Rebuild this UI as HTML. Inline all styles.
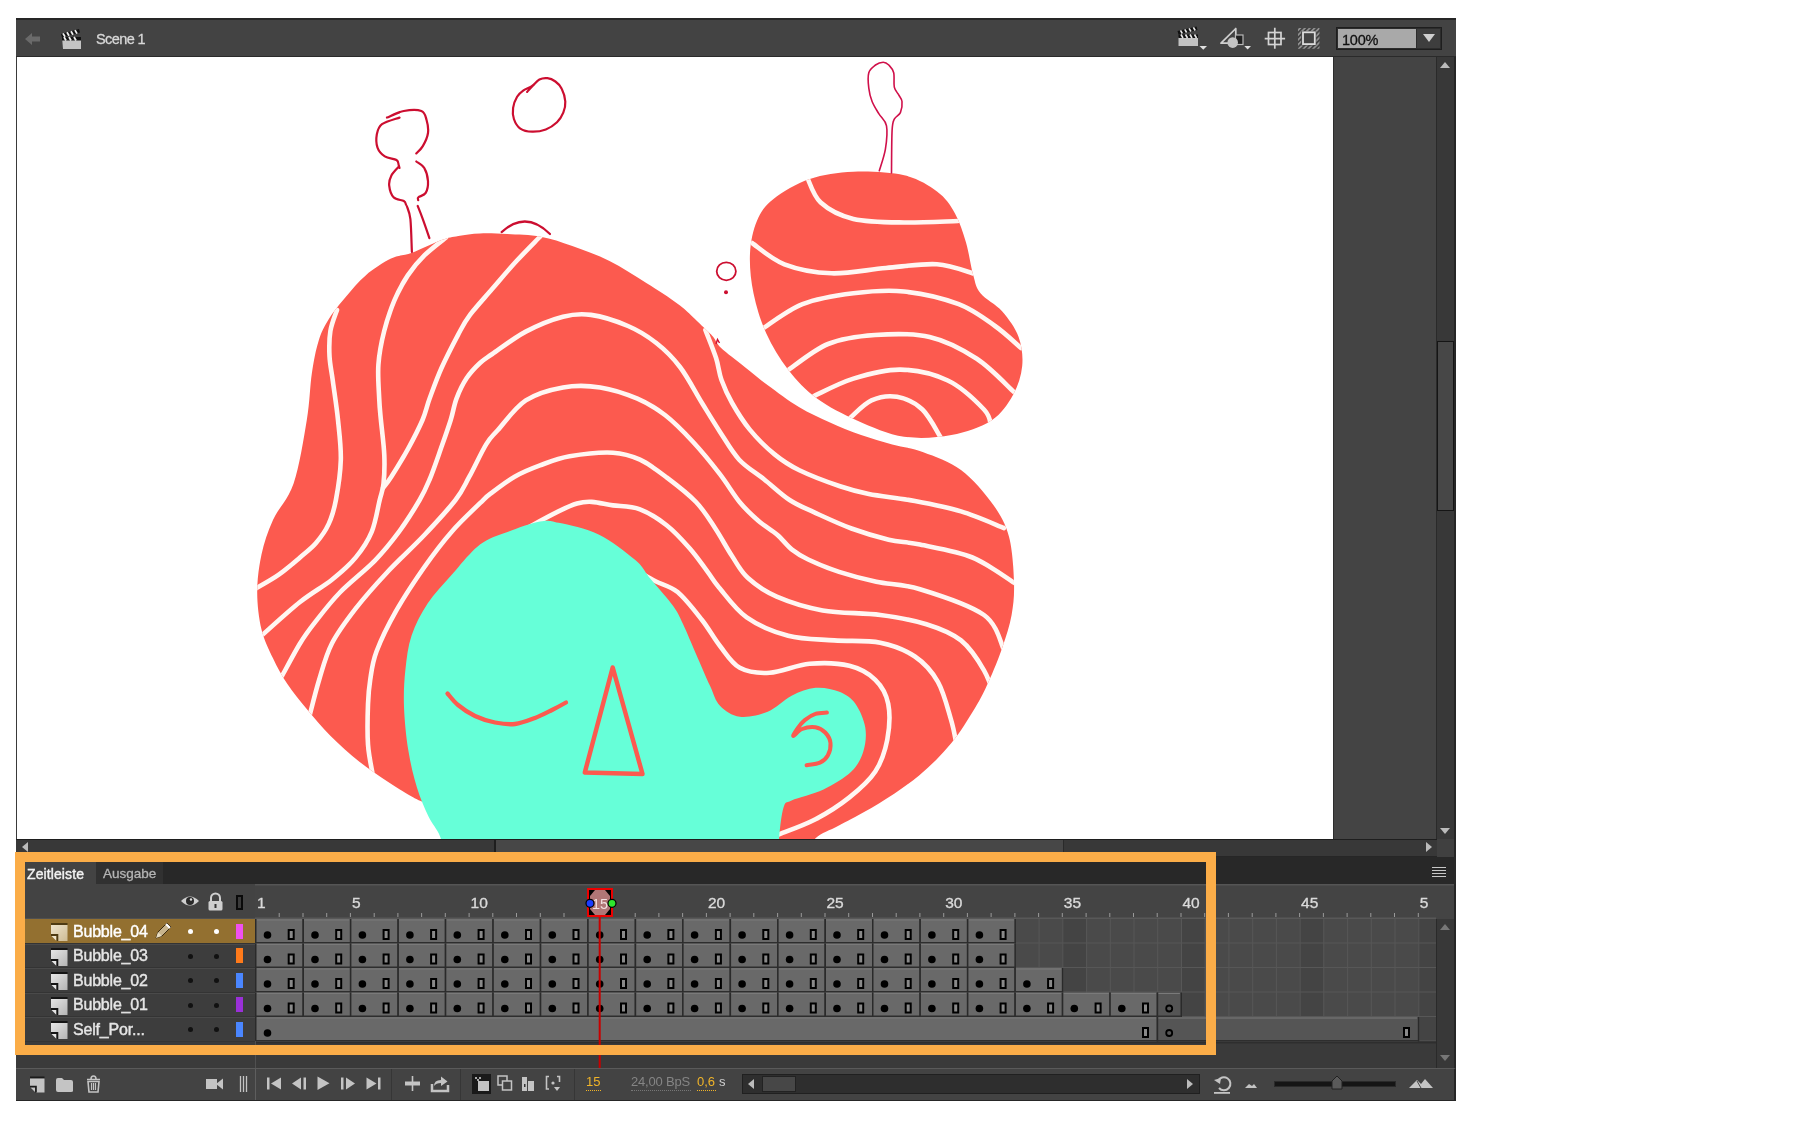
<!DOCTYPE html><html><head><meta charset="utf-8"><style>
*{-webkit-font-smoothing:antialiased}
html,body{margin:0;padding:0;background:#fff;width:1800px;height:1129px;overflow:hidden;position:relative;font-family:"Liberation Sans",sans-serif}
div,svg{box-sizing:border-box;will-change:transform}
.a{position:absolute}
</style></head><body>
<div class="a" style="left:16px;top:18px;width:1440px;height:39px;background:#434343;border-top:2px solid #262626;border-bottom:1px solid #2a2a2a"></div>
<div class="a" style="left:96px;top:31px;font-size:14.5px;color:#d8d8d8;letter-spacing:-0.6px;-webkit-text-stroke:0.3px #d8d8d8">Scene 1</div>
<svg class="a" style="left:24px;top:31px" width="18" height="16"><path d="M1,8 L8,2 L8,5.5 L16,5.5 L16,10.5 L8,10.5 L8,14 Z" fill="#6a6a6a"/></svg>
<svg class="a" style="left:60px;top:28px" width="24" height="22"><path d="M2,9 L21,9 L21,21 L3,21 Z" fill="#c4c4c4"/><path d="M1,6 L19,1 L20,4.5 L2,9.5 Z" fill="#111"/><path d="M3,5.4 L5,8.8 M7,4.3 L9,7.8 M11,3.2 L13,6.7 M15,2.1 L17,5.6" stroke="#eee" stroke-width="1.8"/><rect x="2" y="9" width="19" height="3.5" fill="#111"/><path d="M4,9 L6,12.5 M9,9 L11,12.5 M14,9 L16,12.5" stroke="#eee" stroke-width="1.8"/></svg>
<svg class="a" style="left:1170px;top:22px" width="160" height="34" viewBox="1170 22 160 34"><rect x="1178.5" y="37.5" width="19.5" height="8.5" fill="#c2c2c2"/><rect x="1178.5" y="34.5" width="19.5" height="3.5" fill="#111"/><path d="M1181,34.5 l2,3.5 M1185.5,34.5 l2,3.5 M1190,34.5 l2,3.5 M1194.5,34.5 l2,3.5" stroke="#e8e8e8" stroke-width="1.6"/><path d="M1177.5,31 L1196.5,26.5 L1197.5,30 L1178.5,34.5 Z" fill="#111"/><path d="M1180.5,30.3 l1.8,3.2 M1184.8,29.3 l1.8,3.2 M1189.1,28.3 l1.8,3.2 M1193.4,27.3 l1.8,3.2" stroke="#e8e8e8" stroke-width="1.6"/><path d="M1199.5,46 L1207,46 L1203.25,49.8 Z" fill="#e0e0e0"/><path d="M1221,43.2 L1235.8,28.5 L1235.8,43.2 Z" fill="none" stroke="#d0d0d0" stroke-width="1.7" stroke-linejoin="round"/><rect x="1235.5" y="35" width="7.5" height="9.5" fill="#222" stroke="#b8b8b8" stroke-width="1.2"/><circle cx="1232.7" cy="42.6" r="5.3" fill="#c4c4c4"/><path d="M1244.3,46 L1251,46 L1247.65,49.6 Z" fill="#e0e0e0"/><rect x="1268.5" y="32.5" width="12.5" height="12" fill="none" stroke="#d4d4d4" stroke-width="1.7"/><path d="M1264.7,38.6 H1285.1 M1274.8,27.8 V48.7" stroke="#d4d4d4" stroke-width="1.7"/><defs><pattern id="htch" width="3.4" height="3.4" patternUnits="userSpaceOnUse" patternTransform="rotate(45)"><rect width="1.7" height="3.4" fill="#909090"/></pattern></defs><path d="M1298,28 H1319.5 V48.8 H1298 Z M1301.2,31.2 V45.6 H1316.3 V31.2 Z" fill="url(#htch)" fill-rule="evenodd"/><rect x="1303" y="32.3" width="11.8" height="11.8" fill="#434343" stroke="#dcdcdc" stroke-width="1.8"/></svg>
<div class="a" style="left:1336px;top:27px;width:106px;height:23px;background:#2c2c2c;border:1px solid #1e1e1e"></div>
<div class="a" style="left:1338px;top:29px;width:78px;height:19px;background:#a9a9a9"></div>
<div class="a" style="left:1417px;top:29px;width:23px;height:19px;background:#3e3e3e"></div>
<svg class="a" style="left:1422px;top:33px" width="14" height="10"><path d="M1,1 L13,1 L7,9 Z" fill="#cfcfcf"/></svg>
<div class="a" style="left:1342px;top:31.5px;font-size:14.5px;color:#111;letter-spacing:-0.2px;-webkit-text-stroke:0.3px #111">100%</div>
<div class="a" style="left:16px;top:57px;width:1317px;height:782px;background:#fff;border-left:1px solid #3a3a3a;overflow:hidden"></div>
<svg width="1316" height="782" viewBox="17 57 1316 782" style="position:absolute;left:17px;top:57px">
<defs><clipPath id="hc"><path d="M412.0,252.7 C420.4,249.6 433.8,242.8 441.5,240.0 C449.2,237.2 451.9,237.0 458.3,235.9 C464.7,234.8 471.9,233.7 480.0,233.4 C488.1,233.1 497.1,233.4 507.2,234.0 C517.3,234.6 529.9,234.7 540.7,236.7 C551.6,238.7 560.8,241.9 572.3,246.0 C583.8,250.1 597.1,254.8 609.5,261.0 C621.9,267.2 635.0,275.8 646.7,283.2 C658.5,290.6 670.2,297.9 680.0,305.6 C689.8,313.3 700.1,324.1 705.6,329.3 C711.1,334.6 710.7,334.0 713.3,337.1 C715.9,340.2 715.9,343.1 721.1,348.0 C726.3,352.9 736.6,360.5 744.4,366.7 C752.2,372.9 758.7,378.6 767.8,385.3 C776.9,392.0 788.5,400.9 798.9,407.1 C809.3,413.3 819.6,417.9 830.0,422.6 C840.4,427.3 850.7,431.5 861.1,435.1 C871.5,438.7 881.8,441.5 892.2,444.4 C902.6,447.2 911.8,447.9 923.3,452.2 C934.8,456.5 949.4,461.3 961.0,470.0 C972.6,478.7 985.0,493.4 993.0,504.5 C1001.0,515.6 1005.5,523.7 1009.0,536.7 C1012.5,549.8 1013.6,569.8 1014.0,582.8 C1014.4,595.8 1013.5,604.2 1011.6,615.0 C1009.7,625.8 1006.2,636.2 1002.4,647.3 C998.6,658.4 993.2,671.7 988.6,681.8 C984.0,691.9 981.3,697.7 975.0,708.0 C968.7,718.3 960.3,732.4 951.0,743.6 C941.7,754.8 931.1,765.5 919.1,775.4 C907.1,785.3 892.6,795.0 879.3,803.3 C866.0,811.6 850.0,819.5 839.4,825.3 C828.8,831.1 822.1,832.4 815.5,838.2 C808.9,844.0 849.2,856.4 800.0,860.0 C750.8,863.6 579.2,868.0 520.0,860.0 C460.8,852.0 461.2,821.7 445.0,812.0 C428.8,802.3 428.3,804.6 422.7,802.0 C417.1,799.4 416.9,799.6 411.2,796.3 C405.4,793.0 396.8,787.8 388.2,782.0 C379.6,776.2 369.0,769.5 359.4,761.8 C349.8,754.1 339.2,744.6 330.6,736.0 C322.0,727.4 314.8,718.7 307.6,710.0 C300.4,701.3 293.2,692.6 287.4,684.0 C281.6,675.4 277.3,667.3 273.0,658.2 C268.7,649.1 264.1,640.4 261.5,629.4 C258.9,618.4 257.2,604.5 257.2,592.0 C257.2,579.5 258.9,566.5 261.5,554.5 C264.1,542.5 267.6,531.8 273.0,520.0 C278.4,508.2 288.0,500.3 293.6,483.6 C299.2,466.9 303.8,438.4 306.8,420.0 C309.9,401.6 309.9,386.2 311.9,373.0 C313.9,359.8 315.8,350.0 318.6,341.0 C321.4,332.0 324.2,326.5 328.7,319.2 C333.2,311.9 339.3,304.6 345.5,297.3 C351.7,290.0 358.1,281.8 365.7,275.4 C373.3,268.9 383.3,262.4 391.0,258.6 C398.7,254.8 403.6,255.8 412.0,252.7Z"/></clipPath><clipPath id="bc"><path d="M809.8,179.0 C823.1,174.5 837.7,172.3 853.4,171.7 C869.1,171.1 890.3,172.0 904.2,175.3 C918.1,178.6 928.5,185.2 937.0,191.6 C945.5,197.9 950.2,204.9 955.0,213.4 C959.8,221.9 963.0,232.2 966.0,242.5 C969.0,252.8 970.8,266.5 973.2,275.0 C975.6,283.5 975.6,287.2 980.5,293.3 C985.4,299.4 995.9,304.2 1002.3,311.5 C1008.6,318.8 1015.3,327.9 1018.6,337.0 C1021.9,346.1 1023.1,356.3 1022.2,366.0 C1021.3,375.7 1018.1,385.9 1013.0,395.0 C1007.9,404.1 1001.7,413.7 991.4,420.4 C981.1,427.1 966.0,432.3 951.4,435.0 C936.8,437.7 919.7,439.1 904.0,436.7 C888.3,434.3 871.5,426.8 857.0,420.4 C842.5,414.0 828.5,407.1 817.0,398.6 C805.5,390.1 796.5,380.5 788.0,369.6 C779.5,358.7 772.0,346.0 766.2,333.3 C760.5,320.6 756.2,306.6 753.5,293.3 C750.8,280.0 749.4,265.5 750.0,253.4 C750.6,241.3 753.1,229.8 757.0,220.7 C760.9,211.6 764.7,205.8 773.5,198.9 C782.3,192.0 796.5,183.5 809.8,179.0Z"/></clipPath></defs>
<path d="M412.0,252.7 C420.4,249.6 433.8,242.8 441.5,240.0 C449.2,237.2 451.9,237.0 458.3,235.9 C464.7,234.8 471.9,233.7 480.0,233.4 C488.1,233.1 497.1,233.4 507.2,234.0 C517.3,234.6 529.9,234.7 540.7,236.7 C551.6,238.7 560.8,241.9 572.3,246.0 C583.8,250.1 597.1,254.8 609.5,261.0 C621.9,267.2 635.0,275.8 646.7,283.2 C658.5,290.6 670.2,297.9 680.0,305.6 C689.8,313.3 700.1,324.1 705.6,329.3 C711.1,334.6 710.7,334.0 713.3,337.1 C715.9,340.2 715.9,343.1 721.1,348.0 C726.3,352.9 736.6,360.5 744.4,366.7 C752.2,372.9 758.7,378.6 767.8,385.3 C776.9,392.0 788.5,400.9 798.9,407.1 C809.3,413.3 819.6,417.9 830.0,422.6 C840.4,427.3 850.7,431.5 861.1,435.1 C871.5,438.7 881.8,441.5 892.2,444.4 C902.6,447.2 911.8,447.9 923.3,452.2 C934.8,456.5 949.4,461.3 961.0,470.0 C972.6,478.7 985.0,493.4 993.0,504.5 C1001.0,515.6 1005.5,523.7 1009.0,536.7 C1012.5,549.8 1013.6,569.8 1014.0,582.8 C1014.4,595.8 1013.5,604.2 1011.6,615.0 C1009.7,625.8 1006.2,636.2 1002.4,647.3 C998.6,658.4 993.2,671.7 988.6,681.8 C984.0,691.9 981.3,697.7 975.0,708.0 C968.7,718.3 960.3,732.4 951.0,743.6 C941.7,754.8 931.1,765.5 919.1,775.4 C907.1,785.3 892.6,795.0 879.3,803.3 C866.0,811.6 850.0,819.5 839.4,825.3 C828.8,831.1 822.1,832.4 815.5,838.2 C808.9,844.0 849.2,856.4 800.0,860.0 C750.8,863.6 579.2,868.0 520.0,860.0 C460.8,852.0 461.2,821.7 445.0,812.0 C428.8,802.3 428.3,804.6 422.7,802.0 C417.1,799.4 416.9,799.6 411.2,796.3 C405.4,793.0 396.8,787.8 388.2,782.0 C379.6,776.2 369.0,769.5 359.4,761.8 C349.8,754.1 339.2,744.6 330.6,736.0 C322.0,727.4 314.8,718.7 307.6,710.0 C300.4,701.3 293.2,692.6 287.4,684.0 C281.6,675.4 277.3,667.3 273.0,658.2 C268.7,649.1 264.1,640.4 261.5,629.4 C258.9,618.4 257.2,604.5 257.2,592.0 C257.2,579.5 258.9,566.5 261.5,554.5 C264.1,542.5 267.6,531.8 273.0,520.0 C278.4,508.2 288.0,500.3 293.6,483.6 C299.2,466.9 303.8,438.4 306.8,420.0 C309.9,401.6 309.9,386.2 311.9,373.0 C313.9,359.8 315.8,350.0 318.6,341.0 C321.4,332.0 324.2,326.5 328.7,319.2 C333.2,311.9 339.3,304.6 345.5,297.3 C351.7,290.0 358.1,281.8 365.7,275.4 C373.3,268.9 383.3,262.4 391.0,258.6 C398.7,254.8 403.6,255.8 412.0,252.7Z" fill="#fc5a4f"/>
<path d="M809.8,179.0 C823.1,174.5 837.7,172.3 853.4,171.7 C869.1,171.1 890.3,172.0 904.2,175.3 C918.1,178.6 928.5,185.2 937.0,191.6 C945.5,197.9 950.2,204.9 955.0,213.4 C959.8,221.9 963.0,232.2 966.0,242.5 C969.0,252.8 970.8,266.5 973.2,275.0 C975.6,283.5 975.6,287.2 980.5,293.3 C985.4,299.4 995.9,304.2 1002.3,311.5 C1008.6,318.8 1015.3,327.9 1018.6,337.0 C1021.9,346.1 1023.1,356.3 1022.2,366.0 C1021.3,375.7 1018.1,385.9 1013.0,395.0 C1007.9,404.1 1001.7,413.7 991.4,420.4 C981.1,427.1 966.0,432.3 951.4,435.0 C936.8,437.7 919.7,439.1 904.0,436.7 C888.3,434.3 871.5,426.8 857.0,420.4 C842.5,414.0 828.5,407.1 817.0,398.6 C805.5,390.1 796.5,380.5 788.0,369.6 C779.5,358.7 772.0,346.0 766.2,333.3 C760.5,320.6 756.2,306.6 753.5,293.3 C750.8,280.0 749.4,265.5 750.0,253.4 C750.6,241.3 753.1,229.8 757.0,220.7 C760.9,211.6 764.7,205.8 773.5,198.9 C782.3,192.0 796.5,183.5 809.8,179.0Z" fill="#fc5a4f"/>
<g clip-path="url(#hc)">
<path d="M337.0,310.0 C335.9,313.5 331.6,323.3 330.4,331.0 C329.1,338.7 329.1,347.8 329.5,356.2 C329.9,364.6 331.5,370.9 332.9,381.5 C334.3,392.1 336.7,406.9 338.0,420.0 C339.3,433.1 341.2,446.7 340.8,460.0 C340.4,473.3 337.9,489.4 335.9,500.0 C333.9,510.6 332.0,516.7 328.7,523.9 C325.4,531.1 320.8,537.4 316.0,543.0 C311.2,548.6 306.2,552.1 300.0,557.4 C293.8,562.7 286.3,569.4 278.8,574.7 C271.3,580.0 259.0,586.6 255.0,589.0" fill="none" stroke="#fff6f2" stroke-width="4.6" stroke-linecap="round"/>
<path d="M446.0,237.5 C442.4,240.4 431.0,248.9 424.6,255.2 C418.2,261.5 412.9,267.8 407.8,275.4 C402.8,283.0 398.2,291.4 394.3,300.7 C390.4,310.0 386.9,320.4 384.2,331.0 C381.5,341.6 379.2,353.4 378.4,364.6 C377.6,375.8 378.8,389.1 379.2,398.3 C379.6,407.5 380.0,410.5 380.9,420.0 C381.8,429.5 383.9,444.8 384.3,455.4 C384.7,466.0 384.3,476.4 383.5,483.8 C382.7,491.2 381.7,492.0 379.7,500.0 C377.7,508.0 375.7,522.3 371.7,531.9 C367.7,541.5 362.4,549.4 355.8,557.4 C349.2,565.4 341.2,572.3 331.9,579.7 C322.6,587.1 312.0,592.5 300.0,602.0 C288.0,611.5 266.7,631.2 260.0,637.0" fill="none" stroke="#fff6f2" stroke-width="4.6" stroke-linecap="round"/>
<path d="M540.7,236.0 C536.7,240.2 524.6,252.2 516.5,261.0 C508.4,269.8 500.1,279.8 492.3,288.8 C484.6,297.8 475.7,307.3 470.0,314.9 C464.3,322.5 463.1,325.4 458.3,334.3 C453.6,343.2 446.3,357.3 441.5,368.0 C436.7,378.7 432.9,389.6 429.7,398.3 C426.5,407.0 426.1,411.7 422.5,420.0 C418.9,428.3 413.5,438.9 408.3,448.3 C403.1,457.8 395.5,470.1 391.3,476.7 C387.1,483.3 384.4,486.1 383.0,488.0" fill="none" stroke="#fff6f2" stroke-width="4.6" stroke-linecap="round"/>
<path d="M282.0,676.0 C285.0,670.6 294.4,652.6 300.0,643.5 C305.6,634.4 309.2,629.7 315.9,621.2 C322.5,612.7 330.1,602.6 339.9,592.5 C349.7,582.4 365.1,570.7 374.9,560.6 C384.7,550.5 391.4,542.0 398.9,531.9 C406.3,521.8 414.5,508.7 419.6,500.0 C424.7,491.3 426.0,488.1 429.6,479.5 C433.2,470.9 437.5,458.2 441.0,448.3 C444.5,438.4 448.1,428.3 450.7,420.0 C453.3,411.7 453.9,405.3 456.6,398.3 C459.3,391.3 462.8,384.0 466.7,378.1 C470.6,372.2 475.7,367.0 480.0,363.0 C484.3,359.0 484.7,359.2 492.3,354.0 C499.9,348.8 514.0,337.8 525.8,331.6 C537.6,325.4 552.1,319.5 563.0,316.7 C573.9,313.9 580.2,313.3 591.0,314.9 C601.8,316.4 617.2,321.4 628.0,326.0 C638.8,330.6 647.3,336.0 656.0,342.8 C664.7,349.6 672.3,357.0 680.0,367.0 C687.7,377.0 695.4,392.3 702.0,403.0 C708.6,413.7 713.5,421.9 719.7,431.4 C725.9,440.8 731.8,451.7 739.2,459.7 C746.6,467.7 755.6,472.5 764.0,479.2 C772.4,485.9 781.2,494.5 789.6,500.0 C798.0,505.5 804.0,507.6 814.3,512.4 C824.6,517.1 839.1,524.0 851.5,528.5 C863.9,533.0 877.3,537.0 888.7,539.7 C900.1,542.4 906.0,541.6 920.0,544.6 C934.0,547.6 956.4,550.9 972.4,557.5 C988.4,564.1 1008.7,579.6 1016.0,584.0" fill="none" stroke="#fff6f2" stroke-width="4.6" stroke-linecap="round"/>
<path d="M309.0,718.0 C310.7,711.7 315.3,692.4 319.1,680.0 C322.9,667.6 325.8,655.4 331.9,643.5 C338.0,631.6 346.5,620.4 355.8,608.4 C365.1,596.4 376.3,583.9 387.7,571.7 C399.1,559.5 413.1,547.0 424.4,535.0 C435.7,523.0 448.0,509.7 455.5,500.0 C463.0,490.3 464.2,486.0 469.3,476.7 C474.4,467.4 481.5,451.9 486.3,444.1 C491.1,436.3 491.3,437.3 497.9,430.0 C504.5,422.7 514.9,407.5 525.8,400.4 C536.6,393.3 550.6,389.6 563.0,387.4 C575.4,385.2 587.8,385.5 600.2,387.4 C612.6,389.3 626.5,394.0 637.4,398.6 C648.2,403.2 656.0,408.1 665.3,415.3 C674.6,422.5 684.0,432.2 693.1,442.0 C702.2,451.8 711.9,463.8 719.7,473.9 C727.5,484.0 733.5,494.6 740.0,502.5 C746.5,510.4 752.4,515.6 758.6,521.0 C764.8,526.4 771.6,529.9 777.2,534.7 C782.8,539.5 786.8,545.5 792.0,549.6 C797.2,553.7 800.4,555.8 808.2,559.5 C816.1,563.2 827.8,568.2 839.1,571.9 C850.5,575.6 862.8,578.9 876.3,581.8 C889.8,584.7 902.0,583.7 920.0,589.2 C938.0,594.7 970.0,604.9 984.0,615.0 C998.0,625.1 1000.7,644.2 1004.0,650.0" fill="none" stroke="#fff6f2" stroke-width="4.6" stroke-linecap="round"/>
<path d="M373.0,776.0 C372.2,770.8 368.8,756.5 368.0,744.5 C367.2,732.5 367.6,715.0 368.0,704.2 C368.4,693.5 368.8,688.8 370.2,680.0 C371.6,671.2 372.2,662.9 376.5,651.5 C380.8,640.1 387.7,625.7 395.7,611.6 C403.7,597.5 415.1,580.3 424.4,567.0 C433.7,553.7 442.2,542.5 451.5,531.9 C460.8,521.3 473.5,509.6 480.0,503.2 C486.5,496.8 484.7,498.1 490.5,493.7 C496.3,489.3 506.4,481.4 514.6,476.7 C522.9,472.0 530.8,468.8 540.0,465.4 C549.2,462.0 557.4,458.4 569.6,456.3 C581.8,454.2 601.3,452.1 613.0,452.7 C624.7,453.3 631.1,455.6 640.0,459.7 C648.9,463.8 657.3,470.3 666.6,477.4 C675.9,484.4 687.9,493.6 696.0,502.0 C704.1,510.4 709.0,519.0 715.0,528.0 C721.0,537.0 726.5,547.7 732.0,556.0 C737.5,564.3 740.5,571.2 748.0,578.0 C755.5,584.8 764.2,591.2 776.7,596.6 C789.2,602.0 805.4,607.3 822.7,610.4 C840.0,613.5 863.0,612.7 880.3,615.0 C897.6,617.3 912.9,620.0 926.4,624.2 C939.9,628.4 951.4,632.7 961.0,640.4 C970.6,648.1 978.0,659.9 984.0,670.3 C990.0,680.7 994.8,697.5 997.0,703.0" fill="none" stroke="#fff6f2" stroke-width="4.6" stroke-linecap="round"/>
<path d="M520.0,532.0 C529.5,527.2 561.5,507.9 577.0,503.5 C592.5,499.1 602.5,504.4 613.0,505.4 C623.5,506.4 631.1,506.0 640.0,509.3 C648.9,512.6 658.3,518.8 666.6,525.3 C674.9,531.8 682.8,540.6 689.6,548.3 C696.4,556.0 702.4,564.8 707.3,571.3 C712.2,577.8 712.4,579.7 719.0,587.4 C725.6,595.1 735.2,609.2 746.7,617.3 C758.2,625.4 773.6,631.9 788.2,635.8 C802.8,639.6 818.9,639.2 834.2,640.4 C849.6,641.5 866.8,640.0 880.3,642.7 C893.8,645.4 905.3,650.0 914.9,656.5 C924.5,663.0 931.9,671.3 937.9,681.8 C943.9,692.3 948.0,709.6 951.0,719.6 C954.0,729.6 955.2,738.3 956.0,742.0" fill="none" stroke="#fff6f2" stroke-width="4.6" stroke-linecap="round"/>
<path d="M636.0,570.0 C639.2,571.8 648.1,577.3 655.0,581.0 C661.9,584.7 669.8,585.5 677.6,592.0 C685.4,598.5 694.9,611.0 702.0,620.0 C709.1,629.0 713.7,638.0 720.0,646.0 C726.3,654.0 731.5,663.3 739.8,667.8 C748.1,672.3 758.1,673.5 769.7,672.8 C781.3,672.1 796.2,665.0 809.5,663.8 C822.8,662.6 838.4,663.1 849.4,665.8 C860.4,668.5 868.8,673.5 875.3,679.8 C881.8,686.1 886.2,693.7 888.2,703.7 C890.2,713.7 889.4,728.3 887.3,739.6 C885.1,750.9 881.6,761.9 875.3,771.5 C869.0,781.1 859.4,789.4 849.4,797.4 C839.4,805.4 827.1,813.2 815.5,819.3 C803.9,825.4 787.2,831.1 779.6,834.2 C772.0,837.3 771.6,837.4 770.0,838.0" fill="none" stroke="#fff6f2" stroke-width="4.6" stroke-linecap="round"/>
<path d="M705.4,330.0 C707.2,334.6 713.3,349.5 716.0,357.8 C718.7,366.1 718.8,372.5 721.5,380.0 C724.2,387.5 727.4,394.7 732.1,403.0 C736.8,411.3 742.7,421.0 749.8,429.6 C756.9,438.2 766.3,447.6 774.6,454.4 C782.9,461.2 788.5,465.0 799.4,470.3 C810.3,475.6 828.4,482.4 840.0,486.3 C851.6,490.2 856.3,491.6 868.8,494.0 C881.3,496.4 899.5,498.1 914.9,501.0 C930.3,503.9 946.1,506.9 961.0,511.4 C975.9,515.9 996.8,525.2 1004.0,528.0" fill="none" stroke="#fff6f2" stroke-width="4.6" stroke-linecap="round"/>
</g><g clip-path="url(#bc)">
<path d="M807.0,177.0 C809.3,181.2 813.0,195.5 820.7,202.5 C828.4,209.5 839.5,215.6 853.4,218.9 C867.3,222.2 886.6,222.2 904.0,222.5 C921.4,222.8 949.0,221.2 958.0,221.0" fill="none" stroke="#fff6f2" stroke-width="4.6" stroke-linecap="round"/>
<path d="M752.0,243.0 C757.4,246.6 771.1,259.2 784.4,264.3 C797.7,269.4 814.7,272.7 831.6,273.3 C848.5,273.9 868.4,269.5 886.0,268.0 C903.6,266.5 922.2,263.3 937.0,264.3 C951.8,265.3 968.7,272.4 975.0,274.0" fill="none" stroke="#fff6f2" stroke-width="4.6" stroke-linecap="round"/>
<path d="M762.0,329.0 C768.8,324.9 787.3,310.1 802.5,304.2 C817.7,298.2 836.5,295.4 853.4,293.3 C870.3,291.2 886.5,289.7 904.0,291.5 C921.5,293.3 943.5,298.4 958.7,304.2 C973.9,309.9 984.6,318.7 995.0,326.0 C1005.4,333.3 1016.7,344.3 1021.0,348.0" fill="none" stroke="#fff6f2" stroke-width="4.6" stroke-linecap="round"/>
<path d="M787.0,371.0 C793.8,366.5 813.3,350.0 828.0,344.0 C842.7,338.0 858.1,336.2 875.0,335.0 C891.9,333.8 912.6,332.9 929.6,336.9 C946.6,340.8 962.7,349.5 976.8,358.7 C990.9,367.9 1007.8,386.4 1014.0,392.0" fill="none" stroke="#fff6f2" stroke-width="4.6" stroke-linecap="round"/>
<path d="M814.0,396.0 C820.6,393.1 839.0,383.0 853.4,378.6 C867.8,374.2 884.9,369.3 900.6,369.6 C916.3,369.9 933.9,373.9 947.8,380.5 C961.7,387.1 976.8,401.9 984.0,409.5 C991.2,417.1 989.8,423.2 991.0,426.0" fill="none" stroke="#fff6f2" stroke-width="4.6" stroke-linecap="round"/>
<path d="M850.0,418.0 C853.6,415.1 863.7,403.9 871.5,400.4 C879.3,396.9 888.5,395.3 897.0,396.8 C905.5,398.3 915.1,402.6 922.4,409.5 C929.7,416.4 937.9,433.2 941.0,438.0" fill="none" stroke="#fff6f2" stroke-width="4.6" stroke-linecap="round"/>
</g>
<path d="M444.0,870.0 C387.7,864.8 443.6,847.9 441.0,839.0 C438.4,830.1 432.5,825.0 428.5,816.5 C424.5,808.0 420.4,798.7 417.0,787.7 C413.6,776.7 410.5,763.8 408.3,750.3 C406.1,736.8 404.5,720.4 404.0,707.0 C403.5,693.6 404.1,681.6 405.4,669.7 C406.7,657.8 407.9,646.5 411.6,635.5 C415.3,624.5 421.0,613.7 427.6,603.6 C434.2,593.5 442.8,584.8 451.5,575.0 C460.2,565.2 470.7,551.8 480.0,544.6 C489.3,537.4 497.5,535.9 507.5,532.0 C517.5,528.1 531.5,523.0 540.0,521.5 C548.5,520.0 548.9,520.6 558.7,522.8 C568.5,524.9 585.9,528.2 598.6,534.4 C611.3,540.6 626.4,552.5 635.0,559.8 C643.6,567.1 643.7,570.5 650.0,578.2 C656.3,585.9 667.5,598.2 673.0,605.8 C678.5,613.4 679.2,616.0 683.0,624.0 C686.8,632.0 691.5,643.7 696.0,654.0 C700.5,664.3 706.0,677.2 710.0,685.8 C714.0,694.4 715.0,700.6 720.0,705.7 C725.0,710.9 731.8,715.7 739.8,716.7 C747.8,717.7 759.1,715.2 767.7,711.7 C776.3,708.2 783.6,699.7 791.6,695.7 C799.6,691.7 807.5,688.5 815.5,687.8 C823.5,687.1 832.8,689.1 839.4,691.7 C846.0,694.4 851.1,697.7 855.4,703.7 C859.7,709.7 864.0,719.6 865.3,727.6 C866.6,735.6 865.6,744.2 863.3,751.5 C861.0,758.8 858.0,765.2 851.4,771.5 C844.8,777.8 833.5,784.6 823.5,789.4 C813.5,794.2 798.2,797.4 791.6,800.4 C785.0,803.4 785.7,800.9 783.6,807.3 C781.5,813.7 779.8,828.5 779.0,839.0 C778.2,849.5 834.8,864.8 779.0,870.0 C723.2,875.2 500.3,875.2 444.0,870.0Z" fill="#66ffd8"/>
<path d="M447.5,693.5 C449.2,695.4 453.4,701.2 458.0,705.0 C462.6,708.8 468.8,713.1 475.0,716.0 C481.2,718.9 488.3,721.2 495.0,722.5 C501.7,723.8 508.3,724.8 515.0,724.0 C521.7,723.2 528.8,720.3 535.0,718.0 C541.2,715.7 546.8,712.6 552.0,710.0 C557.2,707.4 563.7,703.8 566.0,702.5" fill="none" stroke="#fc5a4f" stroke-width="4.3" stroke-linecap="round"/>
<path d="M612.7,667.5 L584.8,772.5 L642.5,774 Z" fill="none" stroke="#fc5a4f" stroke-width="4.5" stroke-linejoin="round"/>
<path d="M826.9,712.6 C825.0,712.8 819.1,712.6 815.4,713.9 C811.7,715.1 807.8,717.7 804.8,720.1 C801.8,722.5 799.6,725.5 797.7,728.1 C795.8,730.8 792.6,735.9 793.3,736.0 C794.0,736.1 798.4,730.5 802.1,729.0 C805.8,727.5 811.5,726.6 815.4,727.2 C819.2,727.8 822.7,729.9 825.2,732.5 C827.7,735.1 830.1,739.3 830.5,743.1 C830.9,746.9 829.6,752.2 827.8,755.5 C826.0,758.8 823.4,761.0 819.9,762.6 C816.4,764.2 808.8,764.8 806.6,765.3" fill="none" stroke="#fc5a4f" stroke-width="4" stroke-linecap="round"/>
<path d="M387.0,117.6 C389.8,116.5 398.1,112.1 403.8,111.0 C409.5,109.9 417.6,109.5 421.4,111.0 C425.2,112.5 425.4,116.1 426.5,119.8 C427.6,123.5 428.6,128.6 428.0,133.0 C427.4,137.4 424.8,142.7 422.8,146.1 C420.9,149.5 417.4,152.2 416.3,153.4" fill="none" stroke="#cc0e30" stroke-width="2.2" stroke-linecap="round"/>
<path d="M399.5,117.6 C396.6,118.7 385.8,121.4 382.0,124.2 C378.2,127.0 377.6,130.6 376.8,134.5 C376.1,138.4 376.2,143.9 377.5,147.6 C378.8,151.2 381.6,154.3 384.8,156.4 C388.0,158.5 394.2,158.6 396.5,160.0 C398.8,161.4 398.2,163.8 398.7,165.1 C399.2,166.4 399.4,167.5 399.5,168.0" fill="none" stroke="#cc0e30" stroke-width="2.2" stroke-linecap="round"/>
<path d="M416.3,161.5 C417.6,162.6 422.4,164.7 424.3,168.0 C426.2,171.3 427.8,177.0 428.0,181.2 C428.2,185.3 427.3,190.2 425.7,192.9 C424.1,195.6 419.6,196.1 418.4,197.3 C417.1,198.5 418.2,199.7 418.2,200.2" fill="none" stroke="#cc0e30" stroke-width="2.2" stroke-linecap="round"/>
<path d="M398.7,166.6 C397.5,168.1 393.0,172.2 391.4,175.4 C389.8,178.6 388.8,181.9 389.2,185.6 C389.6,189.2 391.2,194.7 393.6,197.3 C396.0,199.9 401.7,199.8 403.8,201.0 C405.9,202.2 405.6,204.0 406.0,204.6" fill="none" stroke="#cc0e30" stroke-width="2.2" stroke-linecap="round"/>
<path d="M406.8,206.0 C407.4,208.2 409.5,211.5 410.4,219.2 C411.2,226.9 411.6,246.5 411.9,252.0" fill="none" stroke="#cc0e30" stroke-width="2.2" stroke-linecap="round"/>
<path d="M417.7,206.0 C418.6,208.2 420.9,213.8 422.8,219.2 C424.8,224.6 428.3,235.0 429.4,238.2" fill="none" stroke="#cc0e30" stroke-width="2.2" stroke-linecap="round"/>
<path d="M527.1,91.9 C528.1,90.8 531.0,87.6 533.0,85.5 C535.0,83.4 537.0,80.7 539.4,79.5 C541.8,78.3 544.7,77.9 547.4,78.2 C550.1,78.5 553.0,79.8 555.4,81.5 C557.8,83.2 560.1,85.4 561.7,88.7 C563.4,92.0 565.0,97.5 565.3,101.5 C565.6,105.5 564.7,109.1 563.3,112.6 C561.9,116.0 559.9,119.4 557.0,122.2 C554.1,125.0 549.9,127.8 545.8,129.4 C541.7,131.0 536.5,131.8 532.2,131.7 C528.0,131.6 523.3,130.7 520.3,128.6 C517.2,126.5 515.1,122.5 513.9,119.0 C512.7,115.5 512.6,111.5 513.1,107.8 C513.6,104.1 515.4,99.6 517.1,96.7 C518.8,93.8 521.1,92.0 523.5,90.3 C525.9,88.6 529.1,87.9 531.5,86.3 C533.9,84.7 536.8,81.6 537.8,80.7" fill="none" stroke="#cc0e30" stroke-width="2.2" stroke-linecap="round"/>
<path d="M501.6,232.1 Q525.8,210 550,234" fill="none" stroke="#cc0e30" stroke-width="2.2" stroke-linecap="round"/>
<ellipse cx="726.3" cy="271.3" rx="9.6" ry="9" fill="none" stroke="#cc0e30" stroke-width="1.8"/>
<circle cx="726" cy="292.3" r="2" fill="#cc0e30"/>
<path d="M879.3,170.7 C880.3,167.1 884.2,156.6 885.4,149.1 C886.6,141.6 887.6,131.8 886.5,125.9 C885.4,120.0 881.2,117.8 878.8,113.7 C876.4,109.6 873.8,105.8 872.1,101.5 C870.4,97.2 869.3,93.0 868.8,88.2 C868.2,83.4 867.7,76.6 868.8,72.7 C869.9,68.8 873.1,66.8 875.5,65.0 C877.9,63.2 881.0,62.2 883.2,62.2 C885.4,62.2 887.0,63.2 888.8,65.0 C890.5,66.8 892.8,69.0 893.7,72.7 C894.6,76.4 893.5,83.4 894.3,87.1 C895.1,90.8 897.4,92.5 898.7,94.9 C900.0,97.3 901.7,98.5 902.0,101.5 C902.3,104.5 901.7,109.6 900.4,112.6 C899.1,115.5 895.7,116.2 894.3,119.2 C892.9,122.2 892.6,121.4 892.1,130.3 C891.6,139.2 891.6,165.8 891.5,172.9" fill="none" stroke="#d0104a" stroke-width="1.6" stroke-linecap="round"/>
<path d="M716,344 L717.5,339.5 L719.5,343" fill="none" stroke="#cc0e30" stroke-width="1.4"/>
</svg>
<div class="a" style="left:1333px;top:57px;width:104px;height:782px;background:#444;border-left:1px solid #2d2d2d"></div>
<div class="a" style="left:1436px;top:57px;width:20px;height:782px;background:#383838;border-left:1px solid #2a2a2a;border-right:2px solid #262626"></div>
<div class="a" style="left:1437px;top:341px;width:17px;height:170px;background:#474747;border:1px solid #151515"></div>
<svg class="a" style="left:1439px;top:60px" width="12" height="10"><path d="M1,8 L11,8 L6,2 Z" fill="#bbb"/></svg>
<svg class="a" style="left:1439px;top:826px" width="12" height="10"><path d="M1,2 L11,2 L6,8 Z" fill="#bbb"/></svg>
<div class="a" style="left:16px;top:839px;width:1421px;height:18px;background:#383838;border-top:1px solid #1e1e1e;border-bottom:1px solid #262626"></div>
<div class="a" style="left:494px;top:840px;width:570px;height:16px;background:#474747;border-left:2px solid #1e1e1e;border-right:1px solid #2a2a2a"></div>
<svg class="a" style="left:20px;top:841px" width="10" height="12"><path d="M8,1 L8,11 L2,6 Z" fill="#bbb"/></svg>
<svg class="a" style="left:1424px;top:841px" width="10" height="12"><path d="M2,1 L2,11 L8,6 Z" fill="#bbb"/></svg>
<div class="a" style="left:1437px;top:839px;width:19px;height:18px;background:#404040;border-right:2px solid #262626"></div>
<div class="a" style="left:16px;top:857px;width:1440px;height:244px;background:#3b3b3b;border-right:2px solid #262626;border-bottom:1px solid #262626"></div>
<div class="a" style="left:16px;top:857px;width:1440px;height:27px;background:#282828"></div>
<div class="a" style="left:25px;top:862px;width:71px;height:22px;background:#434343"></div>
<div class="a" style="left:96px;top:862px;width:67px;height:22px;background:#313131"></div>
<div class="a" style="left:27px;top:865.5px;font-size:14px;color:#f2f2f2;letter-spacing:0.1px;-webkit-text-stroke:0.4px #f2f2f2">Zeitleiste</div>
<div class="a" style="left:103px;top:865.5px;font-size:13.5px;color:#b5b5b5;-webkit-text-stroke:0.3px #b5b5b5">Ausgabe</div>
<svg class="a" style="left:1431px;top:866px" width="16" height="12"><path d="M1,1.5 H15 M1,4.5 H15 M1,7.5 H15 M1,10.5 H15" stroke="#c8c8c8" stroke-width="1.2"/></svg>
<div class="a" style="left:16px;top:884px;width:239px;height:35px;background:#434343;border-bottom:1px solid #505050"></div>
<svg class="a" style="left:180px;top:893px" width="20" height="16"><path d="M1,8 Q10,-1 19,8 Q10,17 1,8 Z" fill="#cfcfcf"/><circle cx="10" cy="8" r="4" fill="#2a2a2a"/><circle cx="11" cy="6.5" r="1.2" fill="#ddd"/></svg>
<svg class="a" style="left:207px;top:892px" width="17" height="19"><path d="M4,9 V6 A4.5,4.5 0 0 1 13,6 V9" fill="none" stroke="#cfcfcf" stroke-width="2"/><rect x="1.5" y="9" width="14" height="9.5" rx="1.5" fill="#cfcfcf"/><rect x="7.5" y="12" width="2" height="4" fill="#333"/></svg>
<div class="a" style="left:236px;top:895px;width:7px;height:15px;border:2px solid #0a0a0a;background:#3a3a3a"></div>
<div style="position:absolute;left:16px;top:919.0px;width:239px;height:24.5px;background:#937030"></div>
<div style="position:absolute;left:16px;top:942.5px;width:239px;height:1px;background:#343434"></div>
<svg style="position:absolute;left:49.5px;top:923.0px" width="19" height="20" viewBox="0 0 19 20"><defs><linearGradient id="g0" x1="0" y1="0" x2="1" y2="1"><stop offset="0" stop-color="#efe4cc"/><stop offset="1" stop-color="#cdbb95"/></linearGradient></defs><rect x="1" y="0" width="16.5" height="2" fill="#4e3a12"/><path d="M1,2 H17.5 V18 H7.5 V12 H1 Z" fill="url(#g0)"/><path d="M1.5,13 L6.5,13 L6.5,18 Z" fill="#efe4cc"/><path d="M1,12 H7.4 V18" fill="none" stroke="#4e3a12" stroke-width="1.8"/></svg>
<div style="position:absolute;left:73px;top:922.5px;font:16px 'Liberation Sans',sans-serif;color:#fff;white-space:nowrap;letter-spacing:-0.2px;-webkit-text-stroke:0.4px #fff">Bubble_04</div>
<div style="position:absolute;left:188px;top:929.0px;width:5px;height:5px;border-radius:50%;background:#fff"></div>
<div style="position:absolute;left:214px;top:929.0px;width:5px;height:5px;border-radius:50%;background:#fff"></div>
<div style="position:absolute;left:236px;top:923.5px;width:7px;height:15px;background:#f050f0"></div>
<div style="position:absolute;left:16px;top:943.5px;width:239px;height:24.5px;background:#3d3d3d"></div>
<div style="position:absolute;left:16px;top:943.5px;width:239px;height:1px;background:#4a4a4a"></div>
<div style="position:absolute;left:16px;top:967.0px;width:239px;height:1px;background:#343434"></div>
<svg style="position:absolute;left:49.5px;top:947.5px" width="19" height="20" viewBox="0 0 19 20"><defs><linearGradient id="g1" x1="0" y1="0" x2="1" y2="1"><stop offset="0" stop-color="#e6e6e6"/><stop offset="1" stop-color="#b4b4b4"/></linearGradient></defs><rect x="1" y="0" width="16.5" height="2" fill="#151515"/><path d="M1,2 H17.5 V18 H7.5 V12 H1 Z" fill="url(#g1)"/><path d="M1.5,13 L6.5,13 L6.5,18 Z" fill="#e6e6e6"/><path d="M1,12 H7.4 V18" fill="none" stroke="#151515" stroke-width="1.8"/></svg>
<div style="position:absolute;left:73px;top:947.0px;font:16px 'Liberation Sans',sans-serif;color:#e6e6e6;white-space:nowrap;letter-spacing:-0.2px;-webkit-text-stroke:0.4px #e6e6e6">Bubble_03</div>
<div style="position:absolute;left:188px;top:953.5px;width:5px;height:5px;border-radius:50%;background:#111"></div>
<div style="position:absolute;left:214px;top:953.5px;width:5px;height:5px;border-radius:50%;background:#111"></div>
<div style="position:absolute;left:236px;top:948.0px;width:7px;height:15px;background:#ff7a1a"></div>
<div style="position:absolute;left:16px;top:968.0px;width:239px;height:24.5px;background:#3d3d3d"></div>
<div style="position:absolute;left:16px;top:968.0px;width:239px;height:1px;background:#4a4a4a"></div>
<div style="position:absolute;left:16px;top:991.5px;width:239px;height:1px;background:#343434"></div>
<svg style="position:absolute;left:49.5px;top:972.0px" width="19" height="20" viewBox="0 0 19 20"><defs><linearGradient id="g2" x1="0" y1="0" x2="1" y2="1"><stop offset="0" stop-color="#e6e6e6"/><stop offset="1" stop-color="#b4b4b4"/></linearGradient></defs><rect x="1" y="0" width="16.5" height="2" fill="#151515"/><path d="M1,2 H17.5 V18 H7.5 V12 H1 Z" fill="url(#g2)"/><path d="M1.5,13 L6.5,13 L6.5,18 Z" fill="#e6e6e6"/><path d="M1,12 H7.4 V18" fill="none" stroke="#151515" stroke-width="1.8"/></svg>
<div style="position:absolute;left:73px;top:971.5px;font:16px 'Liberation Sans',sans-serif;color:#e6e6e6;white-space:nowrap;letter-spacing:-0.2px;-webkit-text-stroke:0.4px #e6e6e6">Bubble_02</div>
<div style="position:absolute;left:188px;top:978.0px;width:5px;height:5px;border-radius:50%;background:#111"></div>
<div style="position:absolute;left:214px;top:978.0px;width:5px;height:5px;border-radius:50%;background:#111"></div>
<div style="position:absolute;left:236px;top:972.5px;width:7px;height:15px;background:#4a86ff"></div>
<div style="position:absolute;left:16px;top:992.5px;width:239px;height:24.5px;background:#3d3d3d"></div>
<div style="position:absolute;left:16px;top:992.5px;width:239px;height:1px;background:#4a4a4a"></div>
<div style="position:absolute;left:16px;top:1016.0px;width:239px;height:1px;background:#343434"></div>
<svg style="position:absolute;left:49.5px;top:996.5px" width="19" height="20" viewBox="0 0 19 20"><defs><linearGradient id="g3" x1="0" y1="0" x2="1" y2="1"><stop offset="0" stop-color="#e6e6e6"/><stop offset="1" stop-color="#b4b4b4"/></linearGradient></defs><rect x="1" y="0" width="16.5" height="2" fill="#151515"/><path d="M1,2 H17.5 V18 H7.5 V12 H1 Z" fill="url(#g3)"/><path d="M1.5,13 L6.5,13 L6.5,18 Z" fill="#e6e6e6"/><path d="M1,12 H7.4 V18" fill="none" stroke="#151515" stroke-width="1.8"/></svg>
<div style="position:absolute;left:73px;top:996.0px;font:16px 'Liberation Sans',sans-serif;color:#e6e6e6;white-space:nowrap;letter-spacing:-0.2px;-webkit-text-stroke:0.4px #e6e6e6">Bubble_01</div>
<div style="position:absolute;left:188px;top:1002.5px;width:5px;height:5px;border-radius:50%;background:#111"></div>
<div style="position:absolute;left:214px;top:1002.5px;width:5px;height:5px;border-radius:50%;background:#111"></div>
<div style="position:absolute;left:236px;top:997.0px;width:7px;height:15px;background:#9a30d8"></div>
<div style="position:absolute;left:16px;top:1017.0px;width:239px;height:24.5px;background:#3d3d3d"></div>
<div style="position:absolute;left:16px;top:1017.0px;width:239px;height:1px;background:#4a4a4a"></div>
<div style="position:absolute;left:16px;top:1040.5px;width:239px;height:1px;background:#343434"></div>
<svg style="position:absolute;left:49.5px;top:1021.0px" width="19" height="20" viewBox="0 0 19 20"><defs><linearGradient id="g4" x1="0" y1="0" x2="1" y2="1"><stop offset="0" stop-color="#e6e6e6"/><stop offset="1" stop-color="#b4b4b4"/></linearGradient></defs><rect x="1" y="0" width="16.5" height="2" fill="#151515"/><path d="M1,2 H17.5 V18 H7.5 V12 H1 Z" fill="url(#g4)"/><path d="M1.5,13 L6.5,13 L6.5,18 Z" fill="#e6e6e6"/><path d="M1,12 H7.4 V18" fill="none" stroke="#151515" stroke-width="1.8"/></svg>
<div style="position:absolute;left:73px;top:1020.5px;font:16px 'Liberation Sans',sans-serif;color:#e6e6e6;white-space:nowrap;letter-spacing:-0.2px;-webkit-text-stroke:0.4px #e6e6e6">Self_Por...</div>
<div style="position:absolute;left:188px;top:1027.0px;width:5px;height:5px;border-radius:50%;background:#111"></div>
<div style="position:absolute;left:214px;top:1027.0px;width:5px;height:5px;border-radius:50%;background:#111"></div>
<div style="position:absolute;left:236px;top:1021.5px;width:7px;height:15px;background:#4a86ff"></div>
<svg style="position:absolute;left:153px;top:921px" width="20" height="20"><path d="M3,17 L5,11 L14,2 L18,6 L9,15 Z" fill="#c8b48c" stroke="#3a2a10" stroke-width="1"/><path d="M13,3 L17,7" stroke="#fff" stroke-width="2"/><path d="M3,17 L5,11 L9,15 Z" fill="#e8dcc0"/></svg>
<svg width="1800" height="1129" style="position:absolute;left:0;top:0">
<rect x="255" y="884" width="1199" height="35" fill="#444"/>
<rect x="255" y="884" width="1199" height="1.5" fill="#555"/>
<rect x="255" y="917.5" width="1181" height="1.5" fill="#585858"/>
<rect x="278.7" y="913" width="1" height="4" fill="#9a9a9a"/>
<rect x="302.5" y="913" width="1" height="4" fill="#9a9a9a"/>
<rect x="326.2" y="913" width="1" height="4" fill="#9a9a9a"/>
<rect x="349.9" y="913" width="1" height="4" fill="#9a9a9a"/>
<rect x="373.7" y="913" width="1" height="4" fill="#9a9a9a"/>
<rect x="397.4" y="913" width="1" height="4" fill="#9a9a9a"/>
<rect x="421.1" y="913" width="1" height="4" fill="#9a9a9a"/>
<rect x="444.8" y="913" width="1" height="4" fill="#9a9a9a"/>
<rect x="468.6" y="913" width="1" height="4" fill="#9a9a9a"/>
<rect x="492.3" y="913" width="1" height="4" fill="#9a9a9a"/>
<rect x="516.0" y="913" width="1" height="4" fill="#9a9a9a"/>
<rect x="539.8" y="913" width="1" height="4" fill="#9a9a9a"/>
<rect x="563.5" y="913" width="1" height="4" fill="#9a9a9a"/>
<rect x="587.2" y="913" width="1" height="4" fill="#9a9a9a"/>
<rect x="611.0" y="913" width="1" height="4" fill="#9a9a9a"/>
<rect x="634.7" y="913" width="1" height="4" fill="#9a9a9a"/>
<rect x="658.4" y="913" width="1" height="4" fill="#9a9a9a"/>
<rect x="682.1" y="913" width="1" height="4" fill="#9a9a9a"/>
<rect x="705.9" y="913" width="1" height="4" fill="#9a9a9a"/>
<rect x="729.6" y="913" width="1" height="4" fill="#9a9a9a"/>
<rect x="753.3" y="913" width="1" height="4" fill="#9a9a9a"/>
<rect x="777.1" y="913" width="1" height="4" fill="#9a9a9a"/>
<rect x="800.8" y="913" width="1" height="4" fill="#9a9a9a"/>
<rect x="824.5" y="913" width="1" height="4" fill="#9a9a9a"/>
<rect x="848.2" y="913" width="1" height="4" fill="#9a9a9a"/>
<rect x="872.0" y="913" width="1" height="4" fill="#9a9a9a"/>
<rect x="895.7" y="913" width="1" height="4" fill="#9a9a9a"/>
<rect x="919.4" y="913" width="1" height="4" fill="#9a9a9a"/>
<rect x="943.2" y="913" width="1" height="4" fill="#9a9a9a"/>
<rect x="966.9" y="913" width="1" height="4" fill="#9a9a9a"/>
<rect x="990.6" y="913" width="1" height="4" fill="#9a9a9a"/>
<rect x="1014.4" y="913" width="1" height="4" fill="#9a9a9a"/>
<rect x="1038.1" y="913" width="1" height="4" fill="#9a9a9a"/>
<rect x="1061.8" y="913" width="1" height="4" fill="#9a9a9a"/>
<rect x="1085.6" y="913" width="1" height="4" fill="#9a9a9a"/>
<rect x="1109.3" y="913" width="1" height="4" fill="#9a9a9a"/>
<rect x="1133.0" y="913" width="1" height="4" fill="#9a9a9a"/>
<rect x="1156.7" y="913" width="1" height="4" fill="#9a9a9a"/>
<rect x="1180.5" y="913" width="1" height="4" fill="#9a9a9a"/>
<rect x="1204.2" y="913" width="1" height="4" fill="#9a9a9a"/>
<rect x="1227.9" y="913" width="1" height="4" fill="#9a9a9a"/>
<rect x="1251.7" y="913" width="1" height="4" fill="#9a9a9a"/>
<rect x="1275.4" y="913" width="1" height="4" fill="#9a9a9a"/>
<rect x="1299.1" y="913" width="1" height="4" fill="#9a9a9a"/>
<rect x="1322.9" y="913" width="1" height="4" fill="#9a9a9a"/>
<rect x="1346.6" y="913" width="1" height="4" fill="#9a9a9a"/>
<rect x="1370.3" y="913" width="1" height="4" fill="#9a9a9a"/>
<rect x="1394.0" y="913" width="1" height="4" fill="#9a9a9a"/>
<rect x="1417.8" y="913" width="1" height="4" fill="#9a9a9a"/>
<text x="257.0" y="908" font-family="Liberation Sans" font-size="15.5" fill="#dadada" stroke="#dadada" stroke-width="0.35">1</text>
<text x="351.9" y="908" font-family="Liberation Sans" font-size="15.5" fill="#dadada" stroke="#dadada" stroke-width="0.35">5</text>
<text x="470.6" y="908" font-family="Liberation Sans" font-size="15.5" fill="#dadada" stroke="#dadada" stroke-width="0.35">10</text>
<text x="707.9" y="908" font-family="Liberation Sans" font-size="15.5" fill="#dadada" stroke="#dadada" stroke-width="0.35">20</text>
<text x="826.5" y="908" font-family="Liberation Sans" font-size="15.5" fill="#dadada" stroke="#dadada" stroke-width="0.35">25</text>
<text x="945.2" y="908" font-family="Liberation Sans" font-size="15.5" fill="#dadada" stroke="#dadada" stroke-width="0.35">30</text>
<text x="1063.8" y="908" font-family="Liberation Sans" font-size="15.5" fill="#dadada" stroke="#dadada" stroke-width="0.35">35</text>
<text x="1182.5" y="908" font-family="Liberation Sans" font-size="15.5" fill="#dadada" stroke="#dadada" stroke-width="0.35">40</text>
<text x="1301.1" y="908" font-family="Liberation Sans" font-size="15.5" fill="#dadada" stroke="#dadada" stroke-width="0.35">45</text>
<text x="1419.8" y="908" font-family="Liberation Sans" font-size="15.5" fill="#dadada" stroke="#dadada" stroke-width="0.35">5</text>
<rect x="255" y="919" width="1181" height="122.5" fill="#4a4a4a"/>
<rect x="350.4" y="919" width="23.7" height="122.5" fill="#444"/>
<rect x="469.1" y="919" width="23.7" height="122.5" fill="#444"/>
<rect x="587.7" y="919" width="23.7" height="122.5" fill="#444"/>
<rect x="706.4" y="919" width="23.7" height="122.5" fill="#444"/>
<rect x="825.0" y="919" width="23.7" height="122.5" fill="#444"/>
<rect x="943.7" y="919" width="23.7" height="122.5" fill="#444"/>
<rect x="1062.3" y="919" width="23.7" height="122.5" fill="#444"/>
<rect x="1181.0" y="919" width="23.7" height="122.5" fill="#444"/>
<rect x="1299.6" y="919" width="23.7" height="122.5" fill="#444"/>
<rect x="1418.3" y="919" width="23.7" height="122.5" fill="#444"/>
<rect x="255.5" y="919" width="1" height="122.5" fill="#575757"/>
<rect x="279.2" y="919" width="1" height="122.5" fill="#575757"/>
<rect x="303.0" y="919" width="1" height="122.5" fill="#575757"/>
<rect x="326.7" y="919" width="1" height="122.5" fill="#575757"/>
<rect x="350.4" y="919" width="1" height="122.5" fill="#575757"/>
<rect x="374.1" y="919" width="1" height="122.5" fill="#575757"/>
<rect x="397.9" y="919" width="1" height="122.5" fill="#575757"/>
<rect x="421.6" y="919" width="1" height="122.5" fill="#575757"/>
<rect x="445.3" y="919" width="1" height="122.5" fill="#575757"/>
<rect x="469.1" y="919" width="1" height="122.5" fill="#575757"/>
<rect x="492.8" y="919" width="1" height="122.5" fill="#575757"/>
<rect x="516.5" y="919" width="1" height="122.5" fill="#575757"/>
<rect x="540.3" y="919" width="1" height="122.5" fill="#575757"/>
<rect x="564.0" y="919" width="1" height="122.5" fill="#575757"/>
<rect x="587.7" y="919" width="1" height="122.5" fill="#575757"/>
<rect x="611.5" y="919" width="1" height="122.5" fill="#575757"/>
<rect x="635.2" y="919" width="1" height="122.5" fill="#575757"/>
<rect x="658.9" y="919" width="1" height="122.5" fill="#575757"/>
<rect x="682.6" y="919" width="1" height="122.5" fill="#575757"/>
<rect x="706.4" y="919" width="1" height="122.5" fill="#575757"/>
<rect x="730.1" y="919" width="1" height="122.5" fill="#575757"/>
<rect x="753.8" y="919" width="1" height="122.5" fill="#575757"/>
<rect x="777.6" y="919" width="1" height="122.5" fill="#575757"/>
<rect x="801.3" y="919" width="1" height="122.5" fill="#575757"/>
<rect x="825.0" y="919" width="1" height="122.5" fill="#575757"/>
<rect x="848.8" y="919" width="1" height="122.5" fill="#575757"/>
<rect x="872.5" y="919" width="1" height="122.5" fill="#575757"/>
<rect x="896.2" y="919" width="1" height="122.5" fill="#575757"/>
<rect x="919.9" y="919" width="1" height="122.5" fill="#575757"/>
<rect x="943.7" y="919" width="1" height="122.5" fill="#575757"/>
<rect x="967.4" y="919" width="1" height="122.5" fill="#575757"/>
<rect x="991.1" y="919" width="1" height="122.5" fill="#575757"/>
<rect x="1014.9" y="919" width="1" height="122.5" fill="#575757"/>
<rect x="1038.6" y="919" width="1" height="122.5" fill="#575757"/>
<rect x="1062.3" y="919" width="1" height="122.5" fill="#575757"/>
<rect x="1086.1" y="919" width="1" height="122.5" fill="#575757"/>
<rect x="1109.8" y="919" width="1" height="122.5" fill="#575757"/>
<rect x="1133.5" y="919" width="1" height="122.5" fill="#575757"/>
<rect x="1157.2" y="919" width="1" height="122.5" fill="#575757"/>
<rect x="1181.0" y="919" width="1" height="122.5" fill="#575757"/>
<rect x="1204.7" y="919" width="1" height="122.5" fill="#575757"/>
<rect x="1228.4" y="919" width="1" height="122.5" fill="#575757"/>
<rect x="1252.2" y="919" width="1" height="122.5" fill="#575757"/>
<rect x="1275.9" y="919" width="1" height="122.5" fill="#575757"/>
<rect x="1299.6" y="919" width="1" height="122.5" fill="#575757"/>
<rect x="1323.3" y="919" width="1" height="122.5" fill="#575757"/>
<rect x="1347.1" y="919" width="1" height="122.5" fill="#575757"/>
<rect x="1370.8" y="919" width="1" height="122.5" fill="#575757"/>
<rect x="1394.5" y="919" width="1" height="122.5" fill="#575757"/>
<rect x="1418.3" y="919" width="1" height="122.5" fill="#575757"/>
<rect x="255" y="942.5" width="1181" height="1" fill="#575757"/>
<rect x="255" y="967.0" width="1181" height="1" fill="#575757"/>
<rect x="255" y="991.5" width="1181" height="1" fill="#575757"/>
<rect x="255" y="1016.0" width="1181" height="1" fill="#575757"/>
<rect x="255" y="1040.5" width="1181" height="1" fill="#575757"/>
<rect x="255" y="1041.5" width="1181" height="27" fill="#3a3a3a"/>
<rect x="255" y="1041.5" width="1181" height="2" fill="#2e2e2e"/>
<rect x="255.5" y="919.0" width="47.5" height="24.5" fill="#696969"/>
<rect x="256.5" y="919.5" width="45.5" height="1" fill="#7a7a7a"/>
<rect x="255.0" y="919.0" width="1.5" height="24.5" fill="#2a2a2a"/>
<rect x="302.5" y="919.0" width="1.5" height="24.5" fill="#2a2a2a"/>
<rect x="255.5" y="942.0" width="47.5" height="1.5" fill="#2e2e2e"/>
<circle cx="267.5" cy="935.0" r="3.8" fill="#000"/>
<rect x="288.7" y="930.0" width="5" height="9" fill="#8a8a8a" stroke="#000" stroke-width="2"/>
<rect x="303.0" y="919.0" width="47.5" height="24.5" fill="#696969"/>
<rect x="304.0" y="919.5" width="45.5" height="1" fill="#7a7a7a"/>
<rect x="302.5" y="919.0" width="1.5" height="24.5" fill="#2a2a2a"/>
<rect x="349.9" y="919.0" width="1.5" height="24.5" fill="#2a2a2a"/>
<rect x="303.0" y="942.0" width="47.5" height="1.5" fill="#2e2e2e"/>
<circle cx="315.0" cy="935.0" r="3.8" fill="#000"/>
<rect x="336.2" y="930.0" width="5" height="9" fill="#8a8a8a" stroke="#000" stroke-width="2"/>
<rect x="350.4" y="919.0" width="47.5" height="24.5" fill="#696969"/>
<rect x="351.4" y="919.5" width="45.5" height="1" fill="#7a7a7a"/>
<rect x="349.9" y="919.0" width="1.5" height="24.5" fill="#2a2a2a"/>
<rect x="397.4" y="919.0" width="1.5" height="24.5" fill="#2a2a2a"/>
<rect x="350.4" y="942.0" width="47.5" height="1.5" fill="#2e2e2e"/>
<circle cx="362.4" cy="935.0" r="3.8" fill="#000"/>
<rect x="383.6" y="930.0" width="5" height="9" fill="#8a8a8a" stroke="#000" stroke-width="2"/>
<rect x="397.9" y="919.0" width="47.5" height="24.5" fill="#696969"/>
<rect x="398.9" y="919.5" width="45.5" height="1" fill="#7a7a7a"/>
<rect x="397.4" y="919.0" width="1.5" height="24.5" fill="#2a2a2a"/>
<rect x="444.8" y="919.0" width="1.5" height="24.5" fill="#2a2a2a"/>
<rect x="397.9" y="942.0" width="47.5" height="1.5" fill="#2e2e2e"/>
<circle cx="409.9" cy="935.0" r="3.8" fill="#000"/>
<rect x="431.1" y="930.0" width="5" height="9" fill="#8a8a8a" stroke="#000" stroke-width="2"/>
<rect x="445.3" y="919.0" width="47.5" height="24.5" fill="#696969"/>
<rect x="446.3" y="919.5" width="45.5" height="1" fill="#7a7a7a"/>
<rect x="444.8" y="919.0" width="1.5" height="24.5" fill="#2a2a2a"/>
<rect x="492.3" y="919.0" width="1.5" height="24.5" fill="#2a2a2a"/>
<rect x="445.3" y="942.0" width="47.5" height="1.5" fill="#2e2e2e"/>
<circle cx="457.3" cy="935.0" r="3.8" fill="#000"/>
<rect x="478.6" y="930.0" width="5" height="9" fill="#8a8a8a" stroke="#000" stroke-width="2"/>
<rect x="492.8" y="919.0" width="47.5" height="24.5" fill="#696969"/>
<rect x="493.8" y="919.5" width="45.5" height="1" fill="#7a7a7a"/>
<rect x="492.3" y="919.0" width="1.5" height="24.5" fill="#2a2a2a"/>
<rect x="539.8" y="919.0" width="1.5" height="24.5" fill="#2a2a2a"/>
<rect x="492.8" y="942.0" width="47.5" height="1.5" fill="#2e2e2e"/>
<circle cx="504.8" cy="935.0" r="3.8" fill="#000"/>
<rect x="526.0" y="930.0" width="5" height="9" fill="#8a8a8a" stroke="#000" stroke-width="2"/>
<rect x="540.3" y="919.0" width="47.5" height="24.5" fill="#696969"/>
<rect x="541.3" y="919.5" width="45.5" height="1" fill="#7a7a7a"/>
<rect x="539.8" y="919.0" width="1.5" height="24.5" fill="#2a2a2a"/>
<rect x="587.2" y="919.0" width="1.5" height="24.5" fill="#2a2a2a"/>
<rect x="540.3" y="942.0" width="47.5" height="1.5" fill="#2e2e2e"/>
<circle cx="552.3" cy="935.0" r="3.8" fill="#000"/>
<rect x="573.5" y="930.0" width="5" height="9" fill="#8a8a8a" stroke="#000" stroke-width="2"/>
<rect x="587.7" y="919.0" width="47.5" height="24.5" fill="#696969"/>
<rect x="588.7" y="919.5" width="45.5" height="1" fill="#7a7a7a"/>
<rect x="587.2" y="919.0" width="1.5" height="24.5" fill="#2a2a2a"/>
<rect x="634.7" y="919.0" width="1.5" height="24.5" fill="#2a2a2a"/>
<rect x="587.7" y="942.0" width="47.5" height="1.5" fill="#2e2e2e"/>
<circle cx="599.7" cy="935.0" r="3.8" fill="#000"/>
<rect x="621.0" y="930.0" width="5" height="9" fill="#8a8a8a" stroke="#000" stroke-width="2"/>
<rect x="635.2" y="919.0" width="47.5" height="24.5" fill="#696969"/>
<rect x="636.2" y="919.5" width="45.5" height="1" fill="#7a7a7a"/>
<rect x="634.7" y="919.0" width="1.5" height="24.5" fill="#2a2a2a"/>
<rect x="682.1" y="919.0" width="1.5" height="24.5" fill="#2a2a2a"/>
<rect x="635.2" y="942.0" width="47.5" height="1.5" fill="#2e2e2e"/>
<circle cx="647.2" cy="935.0" r="3.8" fill="#000"/>
<rect x="668.4" y="930.0" width="5" height="9" fill="#8a8a8a" stroke="#000" stroke-width="2"/>
<rect x="682.6" y="919.0" width="47.5" height="24.5" fill="#696969"/>
<rect x="683.6" y="919.5" width="45.5" height="1" fill="#7a7a7a"/>
<rect x="682.1" y="919.0" width="1.5" height="24.5" fill="#2a2a2a"/>
<rect x="729.6" y="919.0" width="1.5" height="24.5" fill="#2a2a2a"/>
<rect x="682.6" y="942.0" width="47.5" height="1.5" fill="#2e2e2e"/>
<circle cx="694.6" cy="935.0" r="3.8" fill="#000"/>
<rect x="715.9" y="930.0" width="5" height="9" fill="#8a8a8a" stroke="#000" stroke-width="2"/>
<rect x="730.1" y="919.0" width="47.5" height="24.5" fill="#696969"/>
<rect x="731.1" y="919.5" width="45.5" height="1" fill="#7a7a7a"/>
<rect x="729.6" y="919.0" width="1.5" height="24.5" fill="#2a2a2a"/>
<rect x="777.1" y="919.0" width="1.5" height="24.5" fill="#2a2a2a"/>
<rect x="730.1" y="942.0" width="47.5" height="1.5" fill="#2e2e2e"/>
<circle cx="742.1" cy="935.0" r="3.8" fill="#000"/>
<rect x="763.3" y="930.0" width="5" height="9" fill="#8a8a8a" stroke="#000" stroke-width="2"/>
<rect x="777.6" y="919.0" width="47.5" height="24.5" fill="#696969"/>
<rect x="778.6" y="919.5" width="45.5" height="1" fill="#7a7a7a"/>
<rect x="777.1" y="919.0" width="1.5" height="24.5" fill="#2a2a2a"/>
<rect x="824.5" y="919.0" width="1.5" height="24.5" fill="#2a2a2a"/>
<rect x="777.6" y="942.0" width="47.5" height="1.5" fill="#2e2e2e"/>
<circle cx="789.6" cy="935.0" r="3.8" fill="#000"/>
<rect x="810.8" y="930.0" width="5" height="9" fill="#8a8a8a" stroke="#000" stroke-width="2"/>
<rect x="825.0" y="919.0" width="47.5" height="24.5" fill="#696969"/>
<rect x="826.0" y="919.5" width="45.5" height="1" fill="#7a7a7a"/>
<rect x="824.5" y="919.0" width="1.5" height="24.5" fill="#2a2a2a"/>
<rect x="872.0" y="919.0" width="1.5" height="24.5" fill="#2a2a2a"/>
<rect x="825.0" y="942.0" width="47.5" height="1.5" fill="#2e2e2e"/>
<circle cx="837.0" cy="935.0" r="3.8" fill="#000"/>
<rect x="858.2" y="930.0" width="5" height="9" fill="#8a8a8a" stroke="#000" stroke-width="2"/>
<rect x="872.5" y="919.0" width="47.5" height="24.5" fill="#696969"/>
<rect x="873.5" y="919.5" width="45.5" height="1" fill="#7a7a7a"/>
<rect x="872.0" y="919.0" width="1.5" height="24.5" fill="#2a2a2a"/>
<rect x="919.4" y="919.0" width="1.5" height="24.5" fill="#2a2a2a"/>
<rect x="872.5" y="942.0" width="47.5" height="1.5" fill="#2e2e2e"/>
<circle cx="884.5" cy="935.0" r="3.8" fill="#000"/>
<rect x="905.7" y="930.0" width="5" height="9" fill="#8a8a8a" stroke="#000" stroke-width="2"/>
<rect x="919.9" y="919.0" width="47.5" height="24.5" fill="#696969"/>
<rect x="920.9" y="919.5" width="45.5" height="1" fill="#7a7a7a"/>
<rect x="919.4" y="919.0" width="1.5" height="24.5" fill="#2a2a2a"/>
<rect x="966.9" y="919.0" width="1.5" height="24.5" fill="#2a2a2a"/>
<rect x="919.9" y="942.0" width="47.5" height="1.5" fill="#2e2e2e"/>
<circle cx="931.9" cy="935.0" r="3.8" fill="#000"/>
<rect x="953.2" y="930.0" width="5" height="9" fill="#8a8a8a" stroke="#000" stroke-width="2"/>
<rect x="967.4" y="919.0" width="47.5" height="24.5" fill="#696969"/>
<rect x="968.4" y="919.5" width="45.5" height="1" fill="#7a7a7a"/>
<rect x="966.9" y="919.0" width="1.5" height="24.5" fill="#2a2a2a"/>
<rect x="1014.4" y="919.0" width="1.5" height="24.5" fill="#2a2a2a"/>
<rect x="967.4" y="942.0" width="47.5" height="1.5" fill="#2e2e2e"/>
<circle cx="979.4" cy="935.0" r="3.8" fill="#000"/>
<rect x="1000.6" y="930.0" width="5" height="9" fill="#8a8a8a" stroke="#000" stroke-width="2"/>
<rect x="255.5" y="943.5" width="47.5" height="24.5" fill="#696969"/>
<rect x="256.5" y="944.0" width="45.5" height="1" fill="#7a7a7a"/>
<rect x="255.0" y="943.5" width="1.5" height="24.5" fill="#2a2a2a"/>
<rect x="302.5" y="943.5" width="1.5" height="24.5" fill="#2a2a2a"/>
<rect x="255.5" y="966.5" width="47.5" height="1.5" fill="#2e2e2e"/>
<circle cx="267.5" cy="959.5" r="3.8" fill="#000"/>
<rect x="288.7" y="954.5" width="5" height="9" fill="#8a8a8a" stroke="#000" stroke-width="2"/>
<rect x="303.0" y="943.5" width="47.5" height="24.5" fill="#696969"/>
<rect x="304.0" y="944.0" width="45.5" height="1" fill="#7a7a7a"/>
<rect x="302.5" y="943.5" width="1.5" height="24.5" fill="#2a2a2a"/>
<rect x="349.9" y="943.5" width="1.5" height="24.5" fill="#2a2a2a"/>
<rect x="303.0" y="966.5" width="47.5" height="1.5" fill="#2e2e2e"/>
<circle cx="315.0" cy="959.5" r="3.8" fill="#000"/>
<rect x="336.2" y="954.5" width="5" height="9" fill="#8a8a8a" stroke="#000" stroke-width="2"/>
<rect x="350.4" y="943.5" width="47.5" height="24.5" fill="#696969"/>
<rect x="351.4" y="944.0" width="45.5" height="1" fill="#7a7a7a"/>
<rect x="349.9" y="943.5" width="1.5" height="24.5" fill="#2a2a2a"/>
<rect x="397.4" y="943.5" width="1.5" height="24.5" fill="#2a2a2a"/>
<rect x="350.4" y="966.5" width="47.5" height="1.5" fill="#2e2e2e"/>
<circle cx="362.4" cy="959.5" r="3.8" fill="#000"/>
<rect x="383.6" y="954.5" width="5" height="9" fill="#8a8a8a" stroke="#000" stroke-width="2"/>
<rect x="397.9" y="943.5" width="47.5" height="24.5" fill="#696969"/>
<rect x="398.9" y="944.0" width="45.5" height="1" fill="#7a7a7a"/>
<rect x="397.4" y="943.5" width="1.5" height="24.5" fill="#2a2a2a"/>
<rect x="444.8" y="943.5" width="1.5" height="24.5" fill="#2a2a2a"/>
<rect x="397.9" y="966.5" width="47.5" height="1.5" fill="#2e2e2e"/>
<circle cx="409.9" cy="959.5" r="3.8" fill="#000"/>
<rect x="431.1" y="954.5" width="5" height="9" fill="#8a8a8a" stroke="#000" stroke-width="2"/>
<rect x="445.3" y="943.5" width="47.5" height="24.5" fill="#696969"/>
<rect x="446.3" y="944.0" width="45.5" height="1" fill="#7a7a7a"/>
<rect x="444.8" y="943.5" width="1.5" height="24.5" fill="#2a2a2a"/>
<rect x="492.3" y="943.5" width="1.5" height="24.5" fill="#2a2a2a"/>
<rect x="445.3" y="966.5" width="47.5" height="1.5" fill="#2e2e2e"/>
<circle cx="457.3" cy="959.5" r="3.8" fill="#000"/>
<rect x="478.6" y="954.5" width="5" height="9" fill="#8a8a8a" stroke="#000" stroke-width="2"/>
<rect x="492.8" y="943.5" width="47.5" height="24.5" fill="#696969"/>
<rect x="493.8" y="944.0" width="45.5" height="1" fill="#7a7a7a"/>
<rect x="492.3" y="943.5" width="1.5" height="24.5" fill="#2a2a2a"/>
<rect x="539.8" y="943.5" width="1.5" height="24.5" fill="#2a2a2a"/>
<rect x="492.8" y="966.5" width="47.5" height="1.5" fill="#2e2e2e"/>
<circle cx="504.8" cy="959.5" r="3.8" fill="#000"/>
<rect x="526.0" y="954.5" width="5" height="9" fill="#8a8a8a" stroke="#000" stroke-width="2"/>
<rect x="540.3" y="943.5" width="47.5" height="24.5" fill="#696969"/>
<rect x="541.3" y="944.0" width="45.5" height="1" fill="#7a7a7a"/>
<rect x="539.8" y="943.5" width="1.5" height="24.5" fill="#2a2a2a"/>
<rect x="587.2" y="943.5" width="1.5" height="24.5" fill="#2a2a2a"/>
<rect x="540.3" y="966.5" width="47.5" height="1.5" fill="#2e2e2e"/>
<circle cx="552.3" cy="959.5" r="3.8" fill="#000"/>
<rect x="573.5" y="954.5" width="5" height="9" fill="#8a8a8a" stroke="#000" stroke-width="2"/>
<rect x="587.7" y="943.5" width="47.5" height="24.5" fill="#696969"/>
<rect x="588.7" y="944.0" width="45.5" height="1" fill="#7a7a7a"/>
<rect x="587.2" y="943.5" width="1.5" height="24.5" fill="#2a2a2a"/>
<rect x="634.7" y="943.5" width="1.5" height="24.5" fill="#2a2a2a"/>
<rect x="587.7" y="966.5" width="47.5" height="1.5" fill="#2e2e2e"/>
<circle cx="599.7" cy="959.5" r="3.8" fill="#000"/>
<rect x="621.0" y="954.5" width="5" height="9" fill="#8a8a8a" stroke="#000" stroke-width="2"/>
<rect x="635.2" y="943.5" width="47.5" height="24.5" fill="#696969"/>
<rect x="636.2" y="944.0" width="45.5" height="1" fill="#7a7a7a"/>
<rect x="634.7" y="943.5" width="1.5" height="24.5" fill="#2a2a2a"/>
<rect x="682.1" y="943.5" width="1.5" height="24.5" fill="#2a2a2a"/>
<rect x="635.2" y="966.5" width="47.5" height="1.5" fill="#2e2e2e"/>
<circle cx="647.2" cy="959.5" r="3.8" fill="#000"/>
<rect x="668.4" y="954.5" width="5" height="9" fill="#8a8a8a" stroke="#000" stroke-width="2"/>
<rect x="682.6" y="943.5" width="47.5" height="24.5" fill="#696969"/>
<rect x="683.6" y="944.0" width="45.5" height="1" fill="#7a7a7a"/>
<rect x="682.1" y="943.5" width="1.5" height="24.5" fill="#2a2a2a"/>
<rect x="729.6" y="943.5" width="1.5" height="24.5" fill="#2a2a2a"/>
<rect x="682.6" y="966.5" width="47.5" height="1.5" fill="#2e2e2e"/>
<circle cx="694.6" cy="959.5" r="3.8" fill="#000"/>
<rect x="715.9" y="954.5" width="5" height="9" fill="#8a8a8a" stroke="#000" stroke-width="2"/>
<rect x="730.1" y="943.5" width="47.5" height="24.5" fill="#696969"/>
<rect x="731.1" y="944.0" width="45.5" height="1" fill="#7a7a7a"/>
<rect x="729.6" y="943.5" width="1.5" height="24.5" fill="#2a2a2a"/>
<rect x="777.1" y="943.5" width="1.5" height="24.5" fill="#2a2a2a"/>
<rect x="730.1" y="966.5" width="47.5" height="1.5" fill="#2e2e2e"/>
<circle cx="742.1" cy="959.5" r="3.8" fill="#000"/>
<rect x="763.3" y="954.5" width="5" height="9" fill="#8a8a8a" stroke="#000" stroke-width="2"/>
<rect x="777.6" y="943.5" width="47.5" height="24.5" fill="#696969"/>
<rect x="778.6" y="944.0" width="45.5" height="1" fill="#7a7a7a"/>
<rect x="777.1" y="943.5" width="1.5" height="24.5" fill="#2a2a2a"/>
<rect x="824.5" y="943.5" width="1.5" height="24.5" fill="#2a2a2a"/>
<rect x="777.6" y="966.5" width="47.5" height="1.5" fill="#2e2e2e"/>
<circle cx="789.6" cy="959.5" r="3.8" fill="#000"/>
<rect x="810.8" y="954.5" width="5" height="9" fill="#8a8a8a" stroke="#000" stroke-width="2"/>
<rect x="825.0" y="943.5" width="47.5" height="24.5" fill="#696969"/>
<rect x="826.0" y="944.0" width="45.5" height="1" fill="#7a7a7a"/>
<rect x="824.5" y="943.5" width="1.5" height="24.5" fill="#2a2a2a"/>
<rect x="872.0" y="943.5" width="1.5" height="24.5" fill="#2a2a2a"/>
<rect x="825.0" y="966.5" width="47.5" height="1.5" fill="#2e2e2e"/>
<circle cx="837.0" cy="959.5" r="3.8" fill="#000"/>
<rect x="858.2" y="954.5" width="5" height="9" fill="#8a8a8a" stroke="#000" stroke-width="2"/>
<rect x="872.5" y="943.5" width="47.5" height="24.5" fill="#696969"/>
<rect x="873.5" y="944.0" width="45.5" height="1" fill="#7a7a7a"/>
<rect x="872.0" y="943.5" width="1.5" height="24.5" fill="#2a2a2a"/>
<rect x="919.4" y="943.5" width="1.5" height="24.5" fill="#2a2a2a"/>
<rect x="872.5" y="966.5" width="47.5" height="1.5" fill="#2e2e2e"/>
<circle cx="884.5" cy="959.5" r="3.8" fill="#000"/>
<rect x="905.7" y="954.5" width="5" height="9" fill="#8a8a8a" stroke="#000" stroke-width="2"/>
<rect x="919.9" y="943.5" width="47.5" height="24.5" fill="#696969"/>
<rect x="920.9" y="944.0" width="45.5" height="1" fill="#7a7a7a"/>
<rect x="919.4" y="943.5" width="1.5" height="24.5" fill="#2a2a2a"/>
<rect x="966.9" y="943.5" width="1.5" height="24.5" fill="#2a2a2a"/>
<rect x="919.9" y="966.5" width="47.5" height="1.5" fill="#2e2e2e"/>
<circle cx="931.9" cy="959.5" r="3.8" fill="#000"/>
<rect x="953.2" y="954.5" width="5" height="9" fill="#8a8a8a" stroke="#000" stroke-width="2"/>
<rect x="967.4" y="943.5" width="47.5" height="24.5" fill="#696969"/>
<rect x="968.4" y="944.0" width="45.5" height="1" fill="#7a7a7a"/>
<rect x="966.9" y="943.5" width="1.5" height="24.5" fill="#2a2a2a"/>
<rect x="1014.4" y="943.5" width="1.5" height="24.5" fill="#2a2a2a"/>
<rect x="967.4" y="966.5" width="47.5" height="1.5" fill="#2e2e2e"/>
<circle cx="979.4" cy="959.5" r="3.8" fill="#000"/>
<rect x="1000.6" y="954.5" width="5" height="9" fill="#8a8a8a" stroke="#000" stroke-width="2"/>
<rect x="255.5" y="968.0" width="47.5" height="24.5" fill="#696969"/>
<rect x="256.5" y="968.5" width="45.5" height="1" fill="#7a7a7a"/>
<rect x="255.0" y="968.0" width="1.5" height="24.5" fill="#2a2a2a"/>
<rect x="302.5" y="968.0" width="1.5" height="24.5" fill="#2a2a2a"/>
<rect x="255.5" y="991.0" width="47.5" height="1.5" fill="#2e2e2e"/>
<circle cx="267.5" cy="984.0" r="3.8" fill="#000"/>
<rect x="288.7" y="979.0" width="5" height="9" fill="#8a8a8a" stroke="#000" stroke-width="2"/>
<rect x="303.0" y="968.0" width="47.5" height="24.5" fill="#696969"/>
<rect x="304.0" y="968.5" width="45.5" height="1" fill="#7a7a7a"/>
<rect x="302.5" y="968.0" width="1.5" height="24.5" fill="#2a2a2a"/>
<rect x="349.9" y="968.0" width="1.5" height="24.5" fill="#2a2a2a"/>
<rect x="303.0" y="991.0" width="47.5" height="1.5" fill="#2e2e2e"/>
<circle cx="315.0" cy="984.0" r="3.8" fill="#000"/>
<rect x="336.2" y="979.0" width="5" height="9" fill="#8a8a8a" stroke="#000" stroke-width="2"/>
<rect x="350.4" y="968.0" width="47.5" height="24.5" fill="#696969"/>
<rect x="351.4" y="968.5" width="45.5" height="1" fill="#7a7a7a"/>
<rect x="349.9" y="968.0" width="1.5" height="24.5" fill="#2a2a2a"/>
<rect x="397.4" y="968.0" width="1.5" height="24.5" fill="#2a2a2a"/>
<rect x="350.4" y="991.0" width="47.5" height="1.5" fill="#2e2e2e"/>
<circle cx="362.4" cy="984.0" r="3.8" fill="#000"/>
<rect x="383.6" y="979.0" width="5" height="9" fill="#8a8a8a" stroke="#000" stroke-width="2"/>
<rect x="397.9" y="968.0" width="47.5" height="24.5" fill="#696969"/>
<rect x="398.9" y="968.5" width="45.5" height="1" fill="#7a7a7a"/>
<rect x="397.4" y="968.0" width="1.5" height="24.5" fill="#2a2a2a"/>
<rect x="444.8" y="968.0" width="1.5" height="24.5" fill="#2a2a2a"/>
<rect x="397.9" y="991.0" width="47.5" height="1.5" fill="#2e2e2e"/>
<circle cx="409.9" cy="984.0" r="3.8" fill="#000"/>
<rect x="431.1" y="979.0" width="5" height="9" fill="#8a8a8a" stroke="#000" stroke-width="2"/>
<rect x="445.3" y="968.0" width="47.5" height="24.5" fill="#696969"/>
<rect x="446.3" y="968.5" width="45.5" height="1" fill="#7a7a7a"/>
<rect x="444.8" y="968.0" width="1.5" height="24.5" fill="#2a2a2a"/>
<rect x="492.3" y="968.0" width="1.5" height="24.5" fill="#2a2a2a"/>
<rect x="445.3" y="991.0" width="47.5" height="1.5" fill="#2e2e2e"/>
<circle cx="457.3" cy="984.0" r="3.8" fill="#000"/>
<rect x="478.6" y="979.0" width="5" height="9" fill="#8a8a8a" stroke="#000" stroke-width="2"/>
<rect x="492.8" y="968.0" width="47.5" height="24.5" fill="#696969"/>
<rect x="493.8" y="968.5" width="45.5" height="1" fill="#7a7a7a"/>
<rect x="492.3" y="968.0" width="1.5" height="24.5" fill="#2a2a2a"/>
<rect x="539.8" y="968.0" width="1.5" height="24.5" fill="#2a2a2a"/>
<rect x="492.8" y="991.0" width="47.5" height="1.5" fill="#2e2e2e"/>
<circle cx="504.8" cy="984.0" r="3.8" fill="#000"/>
<rect x="526.0" y="979.0" width="5" height="9" fill="#8a8a8a" stroke="#000" stroke-width="2"/>
<rect x="540.3" y="968.0" width="47.5" height="24.5" fill="#696969"/>
<rect x="541.3" y="968.5" width="45.5" height="1" fill="#7a7a7a"/>
<rect x="539.8" y="968.0" width="1.5" height="24.5" fill="#2a2a2a"/>
<rect x="587.2" y="968.0" width="1.5" height="24.5" fill="#2a2a2a"/>
<rect x="540.3" y="991.0" width="47.5" height="1.5" fill="#2e2e2e"/>
<circle cx="552.3" cy="984.0" r="3.8" fill="#000"/>
<rect x="573.5" y="979.0" width="5" height="9" fill="#8a8a8a" stroke="#000" stroke-width="2"/>
<rect x="587.7" y="968.0" width="47.5" height="24.5" fill="#696969"/>
<rect x="588.7" y="968.5" width="45.5" height="1" fill="#7a7a7a"/>
<rect x="587.2" y="968.0" width="1.5" height="24.5" fill="#2a2a2a"/>
<rect x="634.7" y="968.0" width="1.5" height="24.5" fill="#2a2a2a"/>
<rect x="587.7" y="991.0" width="47.5" height="1.5" fill="#2e2e2e"/>
<circle cx="599.7" cy="984.0" r="3.8" fill="#000"/>
<rect x="621.0" y="979.0" width="5" height="9" fill="#8a8a8a" stroke="#000" stroke-width="2"/>
<rect x="635.2" y="968.0" width="47.5" height="24.5" fill="#696969"/>
<rect x="636.2" y="968.5" width="45.5" height="1" fill="#7a7a7a"/>
<rect x="634.7" y="968.0" width="1.5" height="24.5" fill="#2a2a2a"/>
<rect x="682.1" y="968.0" width="1.5" height="24.5" fill="#2a2a2a"/>
<rect x="635.2" y="991.0" width="47.5" height="1.5" fill="#2e2e2e"/>
<circle cx="647.2" cy="984.0" r="3.8" fill="#000"/>
<rect x="668.4" y="979.0" width="5" height="9" fill="#8a8a8a" stroke="#000" stroke-width="2"/>
<rect x="682.6" y="968.0" width="47.5" height="24.5" fill="#696969"/>
<rect x="683.6" y="968.5" width="45.5" height="1" fill="#7a7a7a"/>
<rect x="682.1" y="968.0" width="1.5" height="24.5" fill="#2a2a2a"/>
<rect x="729.6" y="968.0" width="1.5" height="24.5" fill="#2a2a2a"/>
<rect x="682.6" y="991.0" width="47.5" height="1.5" fill="#2e2e2e"/>
<circle cx="694.6" cy="984.0" r="3.8" fill="#000"/>
<rect x="715.9" y="979.0" width="5" height="9" fill="#8a8a8a" stroke="#000" stroke-width="2"/>
<rect x="730.1" y="968.0" width="47.5" height="24.5" fill="#696969"/>
<rect x="731.1" y="968.5" width="45.5" height="1" fill="#7a7a7a"/>
<rect x="729.6" y="968.0" width="1.5" height="24.5" fill="#2a2a2a"/>
<rect x="777.1" y="968.0" width="1.5" height="24.5" fill="#2a2a2a"/>
<rect x="730.1" y="991.0" width="47.5" height="1.5" fill="#2e2e2e"/>
<circle cx="742.1" cy="984.0" r="3.8" fill="#000"/>
<rect x="763.3" y="979.0" width="5" height="9" fill="#8a8a8a" stroke="#000" stroke-width="2"/>
<rect x="777.6" y="968.0" width="47.5" height="24.5" fill="#696969"/>
<rect x="778.6" y="968.5" width="45.5" height="1" fill="#7a7a7a"/>
<rect x="777.1" y="968.0" width="1.5" height="24.5" fill="#2a2a2a"/>
<rect x="824.5" y="968.0" width="1.5" height="24.5" fill="#2a2a2a"/>
<rect x="777.6" y="991.0" width="47.5" height="1.5" fill="#2e2e2e"/>
<circle cx="789.6" cy="984.0" r="3.8" fill="#000"/>
<rect x="810.8" y="979.0" width="5" height="9" fill="#8a8a8a" stroke="#000" stroke-width="2"/>
<rect x="825.0" y="968.0" width="47.5" height="24.5" fill="#696969"/>
<rect x="826.0" y="968.5" width="45.5" height="1" fill="#7a7a7a"/>
<rect x="824.5" y="968.0" width="1.5" height="24.5" fill="#2a2a2a"/>
<rect x="872.0" y="968.0" width="1.5" height="24.5" fill="#2a2a2a"/>
<rect x="825.0" y="991.0" width="47.5" height="1.5" fill="#2e2e2e"/>
<circle cx="837.0" cy="984.0" r="3.8" fill="#000"/>
<rect x="858.2" y="979.0" width="5" height="9" fill="#8a8a8a" stroke="#000" stroke-width="2"/>
<rect x="872.5" y="968.0" width="47.5" height="24.5" fill="#696969"/>
<rect x="873.5" y="968.5" width="45.5" height="1" fill="#7a7a7a"/>
<rect x="872.0" y="968.0" width="1.5" height="24.5" fill="#2a2a2a"/>
<rect x="919.4" y="968.0" width="1.5" height="24.5" fill="#2a2a2a"/>
<rect x="872.5" y="991.0" width="47.5" height="1.5" fill="#2e2e2e"/>
<circle cx="884.5" cy="984.0" r="3.8" fill="#000"/>
<rect x="905.7" y="979.0" width="5" height="9" fill="#8a8a8a" stroke="#000" stroke-width="2"/>
<rect x="919.9" y="968.0" width="47.5" height="24.5" fill="#696969"/>
<rect x="920.9" y="968.5" width="45.5" height="1" fill="#7a7a7a"/>
<rect x="919.4" y="968.0" width="1.5" height="24.5" fill="#2a2a2a"/>
<rect x="966.9" y="968.0" width="1.5" height="24.5" fill="#2a2a2a"/>
<rect x="919.9" y="991.0" width="47.5" height="1.5" fill="#2e2e2e"/>
<circle cx="931.9" cy="984.0" r="3.8" fill="#000"/>
<rect x="953.2" y="979.0" width="5" height="9" fill="#8a8a8a" stroke="#000" stroke-width="2"/>
<rect x="967.4" y="968.0" width="47.5" height="24.5" fill="#696969"/>
<rect x="968.4" y="968.5" width="45.5" height="1" fill="#7a7a7a"/>
<rect x="966.9" y="968.0" width="1.5" height="24.5" fill="#2a2a2a"/>
<rect x="1014.4" y="968.0" width="1.5" height="24.5" fill="#2a2a2a"/>
<rect x="967.4" y="991.0" width="47.5" height="1.5" fill="#2e2e2e"/>
<circle cx="979.4" cy="984.0" r="3.8" fill="#000"/>
<rect x="1000.6" y="979.0" width="5" height="9" fill="#8a8a8a" stroke="#000" stroke-width="2"/>
<rect x="1014.9" y="968.0" width="47.5" height="24.5" fill="#696969"/>
<rect x="1015.9" y="968.5" width="45.5" height="1" fill="#7a7a7a"/>
<rect x="1014.4" y="968.0" width="1.5" height="24.5" fill="#2a2a2a"/>
<rect x="1061.8" y="968.0" width="1.5" height="24.5" fill="#2a2a2a"/>
<rect x="1014.9" y="991.0" width="47.5" height="1.5" fill="#2e2e2e"/>
<circle cx="1026.9" cy="984.0" r="3.8" fill="#000"/>
<rect x="1048.1" y="979.0" width="5" height="9" fill="#8a8a8a" stroke="#000" stroke-width="2"/>
<rect x="255.5" y="992.5" width="47.5" height="24.5" fill="#696969"/>
<rect x="256.5" y="993.0" width="45.5" height="1" fill="#7a7a7a"/>
<rect x="255.0" y="992.5" width="1.5" height="24.5" fill="#2a2a2a"/>
<rect x="302.5" y="992.5" width="1.5" height="24.5" fill="#2a2a2a"/>
<rect x="255.5" y="1015.5" width="47.5" height="1.5" fill="#2e2e2e"/>
<circle cx="267.5" cy="1008.5" r="3.8" fill="#000"/>
<rect x="288.7" y="1003.5" width="5" height="9" fill="#8a8a8a" stroke="#000" stroke-width="2"/>
<rect x="303.0" y="992.5" width="47.5" height="24.5" fill="#696969"/>
<rect x="304.0" y="993.0" width="45.5" height="1" fill="#7a7a7a"/>
<rect x="302.5" y="992.5" width="1.5" height="24.5" fill="#2a2a2a"/>
<rect x="349.9" y="992.5" width="1.5" height="24.5" fill="#2a2a2a"/>
<rect x="303.0" y="1015.5" width="47.5" height="1.5" fill="#2e2e2e"/>
<circle cx="315.0" cy="1008.5" r="3.8" fill="#000"/>
<rect x="336.2" y="1003.5" width="5" height="9" fill="#8a8a8a" stroke="#000" stroke-width="2"/>
<rect x="350.4" y="992.5" width="47.5" height="24.5" fill="#696969"/>
<rect x="351.4" y="993.0" width="45.5" height="1" fill="#7a7a7a"/>
<rect x="349.9" y="992.5" width="1.5" height="24.5" fill="#2a2a2a"/>
<rect x="397.4" y="992.5" width="1.5" height="24.5" fill="#2a2a2a"/>
<rect x="350.4" y="1015.5" width="47.5" height="1.5" fill="#2e2e2e"/>
<circle cx="362.4" cy="1008.5" r="3.8" fill="#000"/>
<rect x="383.6" y="1003.5" width="5" height="9" fill="#8a8a8a" stroke="#000" stroke-width="2"/>
<rect x="397.9" y="992.5" width="47.5" height="24.5" fill="#696969"/>
<rect x="398.9" y="993.0" width="45.5" height="1" fill="#7a7a7a"/>
<rect x="397.4" y="992.5" width="1.5" height="24.5" fill="#2a2a2a"/>
<rect x="444.8" y="992.5" width="1.5" height="24.5" fill="#2a2a2a"/>
<rect x="397.9" y="1015.5" width="47.5" height="1.5" fill="#2e2e2e"/>
<circle cx="409.9" cy="1008.5" r="3.8" fill="#000"/>
<rect x="431.1" y="1003.5" width="5" height="9" fill="#8a8a8a" stroke="#000" stroke-width="2"/>
<rect x="445.3" y="992.5" width="47.5" height="24.5" fill="#696969"/>
<rect x="446.3" y="993.0" width="45.5" height="1" fill="#7a7a7a"/>
<rect x="444.8" y="992.5" width="1.5" height="24.5" fill="#2a2a2a"/>
<rect x="492.3" y="992.5" width="1.5" height="24.5" fill="#2a2a2a"/>
<rect x="445.3" y="1015.5" width="47.5" height="1.5" fill="#2e2e2e"/>
<circle cx="457.3" cy="1008.5" r="3.8" fill="#000"/>
<rect x="478.6" y="1003.5" width="5" height="9" fill="#8a8a8a" stroke="#000" stroke-width="2"/>
<rect x="492.8" y="992.5" width="47.5" height="24.5" fill="#696969"/>
<rect x="493.8" y="993.0" width="45.5" height="1" fill="#7a7a7a"/>
<rect x="492.3" y="992.5" width="1.5" height="24.5" fill="#2a2a2a"/>
<rect x="539.8" y="992.5" width="1.5" height="24.5" fill="#2a2a2a"/>
<rect x="492.8" y="1015.5" width="47.5" height="1.5" fill="#2e2e2e"/>
<circle cx="504.8" cy="1008.5" r="3.8" fill="#000"/>
<rect x="526.0" y="1003.5" width="5" height="9" fill="#8a8a8a" stroke="#000" stroke-width="2"/>
<rect x="540.3" y="992.5" width="47.5" height="24.5" fill="#696969"/>
<rect x="541.3" y="993.0" width="45.5" height="1" fill="#7a7a7a"/>
<rect x="539.8" y="992.5" width="1.5" height="24.5" fill="#2a2a2a"/>
<rect x="587.2" y="992.5" width="1.5" height="24.5" fill="#2a2a2a"/>
<rect x="540.3" y="1015.5" width="47.5" height="1.5" fill="#2e2e2e"/>
<circle cx="552.3" cy="1008.5" r="3.8" fill="#000"/>
<rect x="573.5" y="1003.5" width="5" height="9" fill="#8a8a8a" stroke="#000" stroke-width="2"/>
<rect x="587.7" y="992.5" width="47.5" height="24.5" fill="#696969"/>
<rect x="588.7" y="993.0" width="45.5" height="1" fill="#7a7a7a"/>
<rect x="587.2" y="992.5" width="1.5" height="24.5" fill="#2a2a2a"/>
<rect x="634.7" y="992.5" width="1.5" height="24.5" fill="#2a2a2a"/>
<rect x="587.7" y="1015.5" width="47.5" height="1.5" fill="#2e2e2e"/>
<circle cx="599.7" cy="1008.5" r="3.8" fill="#000"/>
<rect x="621.0" y="1003.5" width="5" height="9" fill="#8a8a8a" stroke="#000" stroke-width="2"/>
<rect x="635.2" y="992.5" width="47.5" height="24.5" fill="#696969"/>
<rect x="636.2" y="993.0" width="45.5" height="1" fill="#7a7a7a"/>
<rect x="634.7" y="992.5" width="1.5" height="24.5" fill="#2a2a2a"/>
<rect x="682.1" y="992.5" width="1.5" height="24.5" fill="#2a2a2a"/>
<rect x="635.2" y="1015.5" width="47.5" height="1.5" fill="#2e2e2e"/>
<circle cx="647.2" cy="1008.5" r="3.8" fill="#000"/>
<rect x="668.4" y="1003.5" width="5" height="9" fill="#8a8a8a" stroke="#000" stroke-width="2"/>
<rect x="682.6" y="992.5" width="47.5" height="24.5" fill="#696969"/>
<rect x="683.6" y="993.0" width="45.5" height="1" fill="#7a7a7a"/>
<rect x="682.1" y="992.5" width="1.5" height="24.5" fill="#2a2a2a"/>
<rect x="729.6" y="992.5" width="1.5" height="24.5" fill="#2a2a2a"/>
<rect x="682.6" y="1015.5" width="47.5" height="1.5" fill="#2e2e2e"/>
<circle cx="694.6" cy="1008.5" r="3.8" fill="#000"/>
<rect x="715.9" y="1003.5" width="5" height="9" fill="#8a8a8a" stroke="#000" stroke-width="2"/>
<rect x="730.1" y="992.5" width="47.5" height="24.5" fill="#696969"/>
<rect x="731.1" y="993.0" width="45.5" height="1" fill="#7a7a7a"/>
<rect x="729.6" y="992.5" width="1.5" height="24.5" fill="#2a2a2a"/>
<rect x="777.1" y="992.5" width="1.5" height="24.5" fill="#2a2a2a"/>
<rect x="730.1" y="1015.5" width="47.5" height="1.5" fill="#2e2e2e"/>
<circle cx="742.1" cy="1008.5" r="3.8" fill="#000"/>
<rect x="763.3" y="1003.5" width="5" height="9" fill="#8a8a8a" stroke="#000" stroke-width="2"/>
<rect x="777.6" y="992.5" width="47.5" height="24.5" fill="#696969"/>
<rect x="778.6" y="993.0" width="45.5" height="1" fill="#7a7a7a"/>
<rect x="777.1" y="992.5" width="1.5" height="24.5" fill="#2a2a2a"/>
<rect x="824.5" y="992.5" width="1.5" height="24.5" fill="#2a2a2a"/>
<rect x="777.6" y="1015.5" width="47.5" height="1.5" fill="#2e2e2e"/>
<circle cx="789.6" cy="1008.5" r="3.8" fill="#000"/>
<rect x="810.8" y="1003.5" width="5" height="9" fill="#8a8a8a" stroke="#000" stroke-width="2"/>
<rect x="825.0" y="992.5" width="47.5" height="24.5" fill="#696969"/>
<rect x="826.0" y="993.0" width="45.5" height="1" fill="#7a7a7a"/>
<rect x="824.5" y="992.5" width="1.5" height="24.5" fill="#2a2a2a"/>
<rect x="872.0" y="992.5" width="1.5" height="24.5" fill="#2a2a2a"/>
<rect x="825.0" y="1015.5" width="47.5" height="1.5" fill="#2e2e2e"/>
<circle cx="837.0" cy="1008.5" r="3.8" fill="#000"/>
<rect x="858.2" y="1003.5" width="5" height="9" fill="#8a8a8a" stroke="#000" stroke-width="2"/>
<rect x="872.5" y="992.5" width="47.5" height="24.5" fill="#696969"/>
<rect x="873.5" y="993.0" width="45.5" height="1" fill="#7a7a7a"/>
<rect x="872.0" y="992.5" width="1.5" height="24.5" fill="#2a2a2a"/>
<rect x="919.4" y="992.5" width="1.5" height="24.5" fill="#2a2a2a"/>
<rect x="872.5" y="1015.5" width="47.5" height="1.5" fill="#2e2e2e"/>
<circle cx="884.5" cy="1008.5" r="3.8" fill="#000"/>
<rect x="905.7" y="1003.5" width="5" height="9" fill="#8a8a8a" stroke="#000" stroke-width="2"/>
<rect x="919.9" y="992.5" width="47.5" height="24.5" fill="#696969"/>
<rect x="920.9" y="993.0" width="45.5" height="1" fill="#7a7a7a"/>
<rect x="919.4" y="992.5" width="1.5" height="24.5" fill="#2a2a2a"/>
<rect x="966.9" y="992.5" width="1.5" height="24.5" fill="#2a2a2a"/>
<rect x="919.9" y="1015.5" width="47.5" height="1.5" fill="#2e2e2e"/>
<circle cx="931.9" cy="1008.5" r="3.8" fill="#000"/>
<rect x="953.2" y="1003.5" width="5" height="9" fill="#8a8a8a" stroke="#000" stroke-width="2"/>
<rect x="967.4" y="992.5" width="47.5" height="24.5" fill="#696969"/>
<rect x="968.4" y="993.0" width="45.5" height="1" fill="#7a7a7a"/>
<rect x="966.9" y="992.5" width="1.5" height="24.5" fill="#2a2a2a"/>
<rect x="1014.4" y="992.5" width="1.5" height="24.5" fill="#2a2a2a"/>
<rect x="967.4" y="1015.5" width="47.5" height="1.5" fill="#2e2e2e"/>
<circle cx="979.4" cy="1008.5" r="3.8" fill="#000"/>
<rect x="1000.6" y="1003.5" width="5" height="9" fill="#8a8a8a" stroke="#000" stroke-width="2"/>
<rect x="1014.9" y="992.5" width="47.5" height="24.5" fill="#696969"/>
<rect x="1015.9" y="993.0" width="45.5" height="1" fill="#7a7a7a"/>
<rect x="1014.4" y="992.5" width="1.5" height="24.5" fill="#2a2a2a"/>
<rect x="1061.8" y="992.5" width="1.5" height="24.5" fill="#2a2a2a"/>
<rect x="1014.9" y="1015.5" width="47.5" height="1.5" fill="#2e2e2e"/>
<circle cx="1026.9" cy="1008.5" r="3.8" fill="#000"/>
<rect x="1048.1" y="1003.5" width="5" height="9" fill="#8a8a8a" stroke="#000" stroke-width="2"/>
<rect x="1062.3" y="992.5" width="47.5" height="24.5" fill="#696969"/>
<rect x="1063.3" y="993.0" width="45.5" height="1" fill="#7a7a7a"/>
<rect x="1061.8" y="992.5" width="1.5" height="24.5" fill="#2a2a2a"/>
<rect x="1109.3" y="992.5" width="1.5" height="24.5" fill="#2a2a2a"/>
<rect x="1062.3" y="1015.5" width="47.5" height="1.5" fill="#2e2e2e"/>
<circle cx="1074.3" cy="1008.5" r="3.8" fill="#000"/>
<rect x="1095.6" y="1003.5" width="5" height="9" fill="#8a8a8a" stroke="#000" stroke-width="2"/>
<rect x="1109.8" y="992.5" width="47.5" height="24.5" fill="#696969"/>
<rect x="1110.8" y="993.0" width="45.5" height="1" fill="#7a7a7a"/>
<rect x="1109.3" y="992.5" width="1.5" height="24.5" fill="#2a2a2a"/>
<rect x="1156.7" y="992.5" width="1.5" height="24.5" fill="#2a2a2a"/>
<rect x="1109.8" y="1015.5" width="47.5" height="1.5" fill="#2e2e2e"/>
<circle cx="1121.8" cy="1008.5" r="3.8" fill="#000"/>
<rect x="1143.0" y="1003.5" width="5" height="9" fill="#8a8a8a" stroke="#000" stroke-width="2"/>
<rect x="1157.2" y="992.5" width="23.7" height="24.5" fill="#555"/>
<rect x="1158.2" y="993.0" width="21.7" height="1" fill="#7a7a7a"/>
<rect x="1156.7" y="992.5" width="1.5" height="24.5" fill="#2a2a2a"/>
<rect x="1180.5" y="992.5" width="1.5" height="24.5" fill="#2a2a2a"/>
<rect x="1157.2" y="1015.5" width="23.7" height="1.5" fill="#2e2e2e"/>
<circle cx="1169.2" cy="1008.5" r="3" fill="none" stroke="#000" stroke-width="1.8"/>
<rect x="255.5" y="1017.0" width="901.7" height="24.5" fill="#696969"/>
<rect x="256.5" y="1017.5" width="899.7" height="1" fill="#7a7a7a"/>
<rect x="255.0" y="1017.0" width="1.5" height="24.5" fill="#2a2a2a"/>
<rect x="1156.7" y="1017.0" width="1.5" height="24.5" fill="#2a2a2a"/>
<rect x="255.5" y="1040.0" width="901.7" height="1.5" fill="#2e2e2e"/>
<circle cx="267.5" cy="1033.0" r="3.8" fill="#000"/>
<rect x="1143.0" y="1028.0" width="5" height="9" fill="#8a8a8a" stroke="#000" stroke-width="2"/>
<rect x="1157.2" y="1017.0" width="261.0" height="24.5" fill="#555"/>
<rect x="1158.2" y="1017.5" width="259.0" height="1" fill="#7a7a7a"/>
<rect x="1156.7" y="1017.0" width="1.5" height="24.5" fill="#2a2a2a"/>
<rect x="1417.8" y="1017.0" width="1.5" height="24.5" fill="#2a2a2a"/>
<rect x="1157.2" y="1040.0" width="261.0" height="1.5" fill="#2e2e2e"/>
<circle cx="1169.2" cy="1033.0" r="3" fill="none" stroke="#000" stroke-width="1.8"/>
<rect x="1404.0" y="1028.0" width="5" height="9" fill="#8a8a8a" stroke="#000" stroke-width="2"/>
<rect x="598.7" y="904" width="2" height="164" fill="#c80000"/>
<rect x="588" y="889" width="24" height="27" fill="#000" stroke="#e00" stroke-width="2"/>
<path d="M595,890 L605,890 L610,896 L610,909 L605,915 L595,915 L590,909 L590,896 Z" fill="#b07676"/>
<text x="600" y="909" text-anchor="middle" font-family="Liberation Sans" font-size="14.5" fill="#f2e0e0">15</text>
<circle cx="590" cy="903.3" r="4" fill="#1a3cff" stroke="#000" stroke-width="1.2"/>
<circle cx="612" cy="903.3" r="4" fill="#2ee62e" stroke="#000" stroke-width="1.2"/>
</svg>
<div class="a" style="left:255px;top:1041px;width:1px;height:60px;background:#505050"></div>
<div class="a" style="left:1436px;top:919px;width:20px;height:150px;background:#383838;border-left:1px solid #2a2a2a;border-right:2px solid #262626"></div>
<svg class="a" style="left:1439px;top:922px" width="12" height="10"><path d="M1,8 L11,8 L6,2 Z" fill="#777"/></svg>
<svg class="a" style="left:1439px;top:1053px" width="12" height="10"><path d="M1,2 L11,2 L6,8 Z" fill="#777"/></svg>
<div class="a" style="left:16px;top:1068px;width:1440px;height:33px;background:#434343;border-top:1px solid #5a5a5a;border-right:2px solid #262626;border-bottom:1px solid #262626"></div>
<svg class="a" style="left:29px;top:1076px" width="17" height="18"><rect x="1" y="0.5" width="14.5" height="2" fill="#1a1a1a"/><path d="M1,2.5 H15.5 V16.5 H7 V10.5 H1 Z" fill="#c4c4c4"/><path d="M1.5,11.5 L6,11.5 L6,16 Z" fill="#c4c4c4"/><path d="M1,10.5 H7 V16.5" fill="none" stroke="#1a1a1a" stroke-width="1.6"/></svg>
<svg class="a" style="left:55px;top:1077px" width="19" height="16"><path d="M1,3 Q1,1 3,1 L7,1 L9,3 L16,3 Q18,3 18,5 L18,14 Q18,15 16,15 L3,15 Q1,15 1,13 Z" fill="#c4c4c4"/></svg>
<svg class="a" style="left:85px;top:1075px" width="17" height="18"><path d="M2,4.5 H15 M6,4 Q6,1 8.5,1 Q11,1 11,4" fill="none" stroke="#c4c4c4" stroke-width="1.6"/><path d="M3,6.5 H14 L13,17 H4 Z" fill="none" stroke="#c4c4c4" stroke-width="1.6"/><path d="M6.5,8 V15 M8.5,8 V15 M10.5,8 V15" stroke="#c4c4c4" stroke-width="1.2"/></svg>
<svg class="a" style="left:205px;top:1077px" width="19" height="14"><rect x="1" y="2" width="11" height="10" fill="#c4c4c4"/><path d="M11,7 L18,1.5 L18,12.5 Z" fill="#c4c4c4"/></svg>
<svg class="a" style="left:239px;top:1075px" width="9" height="18"><path d="M1.5,1 V17 M4.5,1 V17 M7.5,1 V17" stroke="#c4c4c4" stroke-width="1.3"/></svg>
<div class="a" style="left:391px;top:1069px;width:1px;height:31px;background:#363636"></div>
<div class="a" style="left:255px;top:1069px;width:1px;height:31px;background:#5e5e5e"></div>
<svg class="a" style="left:266px;top:1076px" width="17" height="15"><rect x="1" y="1.5" width="2.5" height="12" fill="#c4c4c4"/><path d="M15,1.5 L15,13.5 L5,7.5 Z" fill="#c4c4c4"/></svg>
<svg class="a" style="left:291px;top:1076px" width="17" height="15"><path d="M10,1.5 L10,13.5 L1,7.5 Z" fill="#c4c4c4"/><rect x="12.5" y="1.5" width="2.5" height="12" fill="#c4c4c4"/></svg>
<svg class="a" style="left:316px;top:1075px" width="15" height="17"><path d="M1.5,1.5 L1.5,15 L13.5,8.2 Z" fill="#c4c4c4"/></svg>
<svg class="a" style="left:340px;top:1076px" width="17" height="15"><rect x="1" y="1.5" width="2.5" height="12" fill="#c4c4c4"/><path d="M6,1.5 L6,13.5 L15,7.5 Z" fill="#c4c4c4"/></svg>
<svg class="a" style="left:365px;top:1076px" width="17" height="15"><path d="M1.5,1.5 L1.5,13.5 L11.5,7.5 Z" fill="#c4c4c4"/><rect x="13" y="1.5" width="2.5" height="12" fill="#c4c4c4"/></svg>
<svg class="a" style="left:404px;top:1075px" width="17" height="17"><rect x="1" y="6.5" width="15" height="4" fill="#c4c4c4"/><path d="M8.5,1 V16" stroke="#c4c4c4" stroke-width="1.6"/></svg>
<svg class="a" style="left:430px;top:1074px" width="20" height="19"><path d="M2,10 V17 H18 V11" fill="none" stroke="#c4c4c4" stroke-width="2.5"/><path d="M4,12 Q4,6 11,6 L11,2.5 L17.5,7.5 L11,12 L11,9 Q6,9 4,12 Z" fill="#c4c4c4"/></svg>
<div class="a" style="left:460px;top:1069px;width:1px;height:31px;background:#363636"></div>
<div class="a" style="left:472px;top:1074px;width:19px;height:20px;background:#1a1a1a"></div>
<svg class="a" style="left:473px;top:1075px" width="18" height="18"><rect x="5" y="6" width="11" height="10" fill="#c4c4c4"/><path d="M2,2 h2 v2 h-2z M6,2 h2 v2 h-2z M4,4 h2 v2 h-2z" fill="#aaa"/></svg>
<svg class="a" style="left:497px;top:1075px" width="16" height="17"><rect x="1" y="1" width="9" height="9" fill="none" stroke="#c4c4c4" stroke-width="1.5"/><rect x="5.5" y="6" width="9" height="9" fill="#434343" stroke="#c4c4c4" stroke-width="1.5"/></svg>
<svg class="a" style="left:521px;top:1075px" width="14" height="18"><rect x="1" y="2" width="5" height="14" fill="#c4c4c4"/><rect x="7" y="6" width="6" height="10" fill="#c4c4c4"/><rect x="3" y="9" width="1.5" height="3" fill="#333"/></svg>
<svg class="a" style="left:545px;top:1075px" width="16" height="19"><path d="M4,1.5 H1.5 V14 H4 M12,1.5 H14.5 V7" fill="none" stroke="#c4c4c4" stroke-width="1.6"/><circle cx="8" cy="8" r="1.6" fill="#c4c4c4"/><path d="M9,12 L15,12 L12,16 Z" fill="#c4c4c4"/></svg>
<div class="a" style="left:574px;top:1069px;width:1px;height:31px;background:#363636"></div>
<div class="a" style="left:586px;top:1074px;font-size:13px;color:#f0b429">15</div>
<div class="a" style="left:586px;top:1090px;width:15px;height:1px;border-top:1px dotted #f0b429"></div>
<div class="a" style="left:631px;top:1074px;font-size:13px;color:#858585;letter-spacing:-0.2px">24,00 BpS</div>
<div class="a" style="left:631px;top:1090px;width:60px;height:1px;border-top:1px dotted #777"></div>
<div class="a" style="left:697px;top:1074px;font-size:13px;color:#f0b429">0,6</div>
<div class="a" style="left:697px;top:1090px;width:19px;height:1px;border-top:1px dotted #f0b429"></div>
<div class="a" style="left:719px;top:1074px;font-size:13px;color:#d0d0d0">s</div>
<div class="a" style="left:742px;top:1074px;width:458px;height:20px;background:#2e2e2e;border:1px solid #202020"></div>
<div class="a" style="left:762px;top:1076px;width:34px;height:16px;background:#474747;border:1px solid #222"></div>
<svg class="a" style="left:746px;top:1078px" width="10" height="12"><path d="M8,1 L8,11 L2,6 Z" fill="#bbb"/></svg>
<svg class="a" style="left:1185px;top:1078px" width="10" height="12"><path d="M2,1 L2,11 L8,6 Z" fill="#bbb"/></svg>
<svg class="a" style="left:1211px;top:1073px" width="22" height="22"><path d="M7,8 A6.5,6.5 0 1 1 8,15" fill="none" stroke="#c4c4c4" stroke-width="2"/><path d="M3,7 L10,5 L9,11 Z" fill="#c4c4c4"/><rect x="3" y="19" width="16" height="1.8" fill="#c4c4c4"/></svg>
<svg class="a" style="left:1244px;top:1080px" width="14" height="10"><path d="M1,8 L5,4 L8,6 L10,4 L13,8 Z" fill="#c4c4c4"/></svg>
<div class="a" style="left:1274px;top:1081px;width:122px;height:6px;background:#151515;border:1px solid #2a2a2a"></div>
<svg class="a" style="left:1330px;top:1075px" width="14" height="16"><path d="M2,6 L7,1 L12,6 L12,14 L2,14 Z" fill="#5a5a5a" stroke="#222" stroke-width="1"/></svg>
<svg class="a" style="left:1408px;top:1076px" width="26" height="14"><path d="M1,12 L9,4 L13,8 L17,3 L25,12 Z" fill="#c4c4c4"/><path d="M9,5 L13,12" stroke="#434343" stroke-width="1"/></svg>
<div class="a" style="left:15px;top:852px;width:1201px;height:203px;border:10px solid #fbad48"></div>
</body></html>
